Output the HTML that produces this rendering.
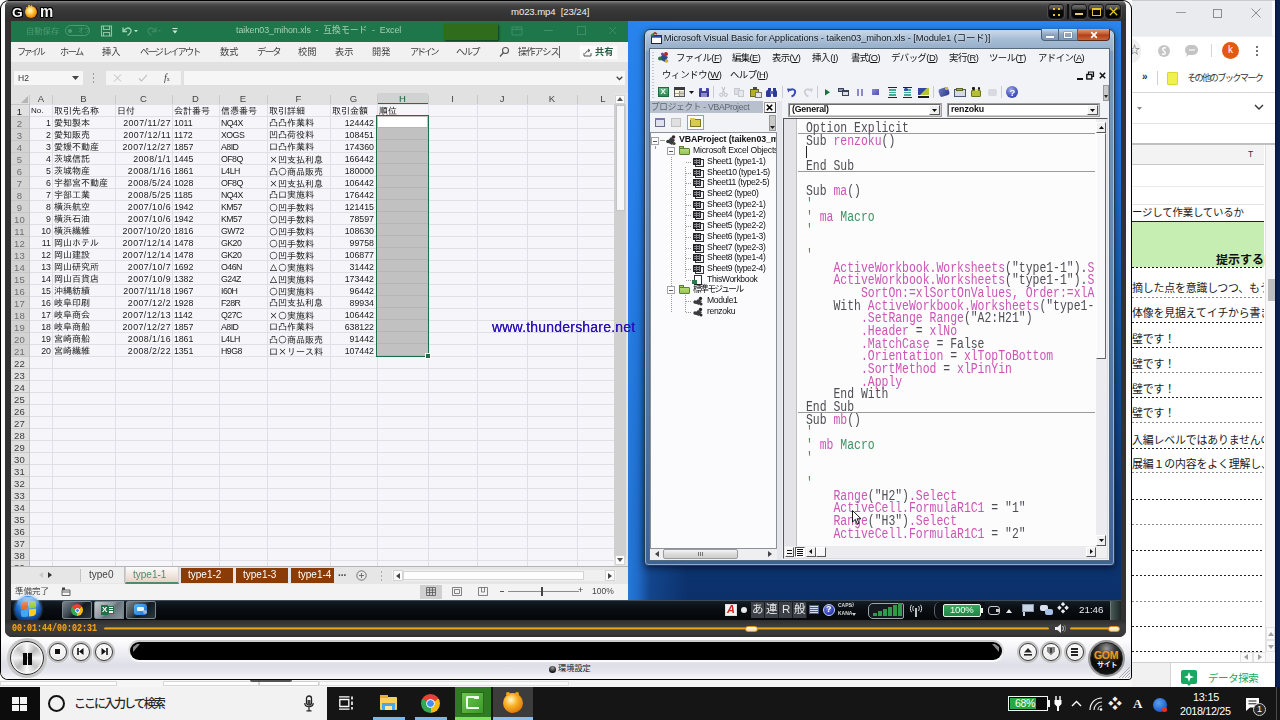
<!DOCTYPE html>
<html lang="ja">
<head>
<meta charset="utf-8">
<title>m023.mp4</title>
<style>
*{box-sizing:border-box;margin:0;padding:0}
html,body{width:1280px;height:720px;overflow:hidden;background:#fff}
body{font-family:"Liberation Sans","Noto Sans CJK JP",sans-serif;font-size:10px;color:#222;position:relative}
.a{position:absolute}
.t{position:absolute;white-space:nowrap;line-height:1}
.xu{font-family:"Liberation Sans","Noto Sans CJK JP",sans-serif;font-size:9px;color:#3a3a3a}
.xc{font-family:"Liberation Sans","IPAGothic","Noto Sans CJK JP",sans-serif;font-size:9px;color:#1a1a1a}
.vu{font-family:"Liberation Sans","Noto Sans CJK JP",sans-serif;font-size:9px;color:#111}
.code{font-family:"Liberation Mono","IPAGothic",monospace;font-size:12px;color:#111;white-space:pre}
svg{position:absolute;overflow:visible}
.cj{font-family:"IPAGothic","Noto Sans CJK JP",sans-serif}
#vid{filter:blur(.5px)}

</style>
</head>
<body>
<div class="a " style="left:0px;top:680px;width:1280px;height:7px;background:#f6f6f6"></div>
<div class="a " style="left:0px;top:681px;width:117px;height:5px;background:#fdfdfd;border:1px solid #d8d8d8"></div>
<div class="a " style="left:163px;top:681px;width:96px;height:5px;background:#fdfdfd;border:1px solid #d8d8d8"></div>
<div class="a " style="left:259px;top:681px;width:60px;height:5px;background:#fff;border:1px solid #cfcfcf"></div>
<div class="a " style="left:319px;top:681px;width:250px;height:5px;background:#fafafa;border:1px solid #e0e0e0"></div>
<div class="a " style="left:250px;top:680px;width:42px;height:2px;background:#555;border-radius:0 0 3px 3px"></div>
<div class="a " style="left:0px;top:0px;width:1132px;height:680px;background:#000;border-radius:9px 9px 4px 8px"></div>
<div class="a " style="left:1px;top:1px;width:1130px;height:678px;background:#fbfbfb;border-radius:8px 8px 3px 7px"></div>
<div class="a " style="left:5px;top:1px;width:1121px;height:636px;background:#323232;border-radius:6px 6px 7px 7px"></div>
<div class="a " style="left:5px;top:0px;width:1121px;height:21px;background:linear-gradient(#000 0,#000 1px,#8a8a8a 1px,#5c5c5c 3px,#404040 6px,#363636 12px,#303030 20px);border-radius:6px 6px 0 0"></div>
<div class="a" style="left:11px;top:20px;width:1110px;height:600px;overflow:hidden"><div class="a" id="vid" style="left:-11px;top:-20px;width:1280px;height:720px">
<div class="a " style="left:628px;top:21px;width:493px;height:580px;background:linear-gradient(90deg,rgba(40,130,236,.880) 0,rgba(40,130,236,.700) 10px,rgba(40,130,236,.250) 22px,rgba(40,130,236,0) 60px),linear-gradient(180deg,#2a86ee 0%,#1f74d8 25%,#1660bd 45%,#114c96 65%,#0d3774 85%,#0c306a 100%)"></div>
<div class="a " style="left:11px;top:21px;width:617px;height:579px;background:#f6f5f9"></div>
<div class="a " style="left:11px;top:21px;width:617px;height:21px;background:#1e774a"></div>
<div class="t xu" style="left:26px;top:26.5px;font-size:8.300px;color:#4f9a73">自動保存</div>
<div class="a " style="left:65px;top:25px;width:25px;height:11px;border:1px solid #4f9a73;border-radius:6px"></div>
<div class="a " style="left:68px;top:29px;width:4px;height:4px;background:#4f9a73;border-radius:2px"></div>
<div class="t xu" style="left:78px;top:27px;font-size:6px;color:#4f9a73">オフ</div>
<svg style="left:100px;top:25px" width="13" height="12" viewBox="0 0 13 12"><path d="M1.5 1h10v10h-10z M3.5 1v3.5h6V1 M3.5 11V7.5h6V11" fill="none" stroke="#8fc4a6" stroke-width="1.1"/></svg>
<svg style="left:121px;top:25px" width="18" height="12" viewBox="0 0 18 12"><path d="M2 2.5v4h4 M2.3 6.2C4 3.3 7.2 2 9.3 4c2 2 .2 4.600-2.800 6.500" fill="none" stroke="#9fd0b4" stroke-width="1.3"/><path d="M13 5h4l-2 2.200z" fill="#b8dcc8"/></svg>
<svg style="left:145px;top:25px" width="18" height="12" viewBox="0 0 18 12"><path d="M11 2.5v4H7 M10.700 6.200C9 3.300 5.800 2 3.700 4c-2 2-.2 4.600 2.800 6.500" fill="none" stroke="#3d8a62" stroke-width="1.3"/><path d="M13 5h3l-1.500 2z" fill="#3d8a62"/></svg>
<svg style="left:171px;top:27px" width="8" height="8" viewBox="0 0 8 8"><path d="M1.500 1.500h5" stroke="#cfe6d8" stroke-width="1"/><path d="M1.500 3.500h5L4 6.500z" fill="#cfe6d8"/></svg>
<div class="t xu" style="left:236px;top:26px;font-size:8.850px;color:#a6cfb7;letter-spacing:-0.050px">taiken03_mihon.xls &nbsp;-&nbsp; 互換モード &nbsp;-&nbsp; Excel</div>
<div class="a " style="left:444px;top:24px;width:54px;height:16px;background:#2f6d1c;box-shadow:1px 1px 2px rgba(0,0,0,.55)"></div>
<svg style="left:511px;top:26px" width="12" height="10" viewBox="0 0 12 10"><path d="M1 1h10v8H1z M1 3.500h10 M6 3.500V1" fill="none" stroke="#3f8e66" stroke-width="1"/></svg>
<div class="a " style="left:544px;top:30px;width:9px;height:1px;background:#3f8e66"></div>
<div class="a " style="left:577px;top:26px;width:9px;height:9px;border:1px solid #3f8e66"></div>
<svg style="left:608px;top:26px" width="9" height="9" viewBox="0 0 9 9"><path d="M1 1l7 7M8 1l-7 7" stroke="#3f8e66" stroke-width="1"/></svg>
<div class="a " style="left:11px;top:42px;width:617px;height:20px;background:#f1f1f1"></div>
<div class="t xu" style="left:17px;top:48px;font-size:9.200px;color:#3c3c3c;letter-spacing:-2.7px">ファイル</div>
<div class="t xu" style="left:60px;top:48px;font-size:9.200px;color:#3c3c3c;letter-spacing:-1.5px">ホーム</div>
<div class="t xu" style="left:102px;top:48px;font-size:9.200px;color:#3c3c3c;letter-spacing:0px">挿入</div>
<div class="t xu" style="left:140px;top:48px;font-size:9.200px;color:#3c3c3c;letter-spacing:-1.8px">ページ レイアウト</div>
<div class="t xu" style="left:220px;top:48px;font-size:9.200px;color:#3c3c3c;letter-spacing:0px">数式</div>
<div class="t xu" style="left:257px;top:48px;font-size:9.200px;color:#3c3c3c;letter-spacing:-1.5px">データ</div>
<div class="t xu" style="left:298px;top:48px;font-size:9.200px;color:#3c3c3c;letter-spacing:0px">校閲</div>
<div class="t xu" style="left:335px;top:48px;font-size:9.200px;color:#3c3c3c;letter-spacing:0px">表示</div>
<div class="t xu" style="left:372px;top:48px;font-size:9.200px;color:#3c3c3c;letter-spacing:0px">開発</div>
<div class="t xu" style="left:410px;top:48px;font-size:9.200px;color:#3c3c3c;letter-spacing:-2.45px">アドイン</div>
<div class="t xu" style="left:456px;top:48px;font-size:9.200px;color:#3c3c3c;letter-spacing:-1.5px">ヘルプ</div>
<svg style="left:499px;top:46px" width="11" height="12" viewBox="0 0 11 12"><circle cx="6.500" cy="4.500" r="3" fill="none" stroke="#555" stroke-width="1.1"/><path d="M4.300 6.800L1 10.500" stroke="#555" stroke-width="1.300"/></svg>
<div class="t xu" style="left:518px;top:48px;font-size:9.200px;color:#3c3c3c;letter-spacing:-1px">操作アシス</div>
<div class="a " style="left:559px;top:46px;width:1px;height:12px;background:#666"></div>
<div class="a " style="left:579px;top:45px;width:39px;height:15px;background:#fbfbfb;border:1px solid #f4f4f4"></div>
<svg style="left:583px;top:48px" width="9" height="9" viewBox="0 0 9 9"><path d="M1 8h7V5 M1 8V5 M2.500 5.500C3 3 5 2.500 6.500 2.500 M5 1l2 1.500L5 4" fill="none" stroke="#444" stroke-width="0.9"/></svg>
<div class="t xu" style="left:595px;top:48px;font-size:9.200px;color:#2c5e45;font-weight:bold">共有</div>
<div class="a " style="left:11px;top:62px;width:617px;height:31px;background:#e1e1e1"></div>
<div class="a " style="left:14px;top:71px;width:69px;height:14px;background:#f6f6f6"></div>
<div class="t xu" style="left:18px;top:74px;font-size:8.500px;color:#333">H2</div>
<svg style="left:72px;top:76px" width="7" height="4" viewBox="0 0 7 4"><path d="M0 0h7L3.500 4z" fill="#444"/></svg>
<div class="a " style="left:93px;top:73px;width:1px;height:2px;background:#9a9a9a"></div>
<div class="a " style="left:93px;top:77px;width:1px;height:2px;background:#9a9a9a"></div>
<div class="a " style="left:93px;top:81px;width:1px;height:2px;background:#9a9a9a"></div>
<div class="a " style="left:106px;top:71px;width:75px;height:14px;background:#f4f4f4"></div>
<svg style="left:113px;top:74px" width="9" height="8" viewBox="0 0 9 8"><path d="M1 .5l7 7M8 .5l-7 7" stroke="#bdbdbd" stroke-width="1"/></svg>
<svg style="left:138px;top:74px" width="10" height="8" viewBox="0 0 10 8"><path d="M1 4.500l2.500 2.500L9 .8" fill="none" stroke="#bdbdbd" stroke-width="1.100"/></svg>
<div class="t " style="left:164px;top:73px;font-size:10px;color:#444;font-family:'Liberation Serif',serif"><i>f</i><span style='font-size:6px'>x</span></div>
<div class="a " style="left:184px;top:71px;width:441px;height:14px;background:#f6f6f6"></div>
<svg style="left:616px;top:76px" width="7" height="5" viewBox="0 0 7 5"><path d="M.700 .700L3.500 3.500 6.300 .700" fill="none" stroke="#444" stroke-width="1.300"/></svg>
<div class="a " style="left:11px;top:93px;width:603px;height:11px;background:#e1e1e1"></div>
<div class="a " style="left:377px;top:93px;width:51px;height:11px;background:#d2d2d2;border-bottom:1.500px solid #217346"></div>
<svg style="left:21px;top:96px" width="7" height="7" viewBox="0 0 7 7"><path d="M7 0v7H0z" fill="#b5b5b5"/></svg>
<div class="t xu" style="left:30px;top:94px;width:22px;text-align:center;font-size:9.500px;color:#444">A</div>
<div class="a " style="left:52px;top:95px;width:1px;height:9px;background:#c9c9c9"></div>
<div class="t xu" style="left:52px;top:94px;width:63px;text-align:center;font-size:9.500px;color:#444">B</div>
<div class="a " style="left:115px;top:95px;width:1px;height:9px;background:#c9c9c9"></div>
<div class="t xu" style="left:115px;top:94px;width:57px;text-align:center;font-size:9.500px;color:#444">C</div>
<div class="a " style="left:172px;top:95px;width:1px;height:9px;background:#c9c9c9"></div>
<div class="t xu" style="left:172px;top:94px;width:47px;text-align:center;font-size:9.500px;color:#444">D</div>
<div class="a " style="left:219px;top:95px;width:1px;height:9px;background:#c9c9c9"></div>
<div class="t xu" style="left:219px;top:94px;width:48px;text-align:center;font-size:9.500px;color:#444">E</div>
<div class="a " style="left:267px;top:95px;width:1px;height:9px;background:#c9c9c9"></div>
<div class="t xu" style="left:267px;top:94px;width:63px;text-align:center;font-size:9.500px;color:#444">F</div>
<div class="a " style="left:330px;top:95px;width:1px;height:9px;background:#c9c9c9"></div>
<div class="t xu" style="left:330px;top:94px;width:47px;text-align:center;font-size:9.500px;color:#444">G</div>
<div class="a " style="left:377px;top:95px;width:1px;height:9px;background:#c9c9c9"></div>
<div class="t xu" style="left:377px;top:94px;width:51px;text-align:center;font-size:9.500px;color:#1d5c3a">H</div>
<div class="a " style="left:428px;top:95px;width:1px;height:9px;background:#c9c9c9"></div>
<div class="t xu" style="left:428px;top:94px;width:49px;text-align:center;font-size:9.500px;color:#444">I</div>
<div class="a " style="left:477px;top:95px;width:1px;height:9px;background:#c9c9c9"></div>
<div class="t xu" style="left:477px;top:94px;width:50px;text-align:center;font-size:9.500px;color:#444">J</div>
<div class="a " style="left:527px;top:95px;width:1px;height:9px;background:#c9c9c9"></div>
<div class="t xu" style="left:527px;top:94px;width:50px;text-align:center;font-size:9.500px;color:#444">K</div>
<div class="a " style="left:577px;top:95px;width:1px;height:9px;background:#c9c9c9"></div>
<div class="t xu" style="left:577px;top:94px;width:52px;text-align:center;font-size:9.500px;color:#444">L</div>
<div class="a " style="left:614px;top:95px;width:1px;height:9px;background:#c9c9c9"></div>
<div class="a " style="left:29px;top:95px;width:1px;height:9px;background:#c9c9c9"></div>
<div class="a " style="left:11px;top:104px;width:19px;height:462px;background:#e1e1e1"></div>
<div class="a " style="left:11px;top:116px;width:19px;height:240px;background:#d3d3d3;border-right:1.500px solid #217346"></div>
<div class="a " style="left:30px;top:104px;width:584px;height:462px;background:repeating-linear-gradient(180deg,#e0dfe5 0,#e0dfe5 1px,transparent 1px,transparent 12px)"></div>
<div class="a " style="left:11px;top:104px;width:19px;height:462px;background:repeating-linear-gradient(180deg,#c6c6c6 0,#c6c6c6 1px,transparent 1px,transparent 12px)"></div>
<div class="a " style="left:52px;top:104px;width:1px;height:462px;background:#e0dfe5"></div>
<div class="a " style="left:115px;top:104px;width:1px;height:462px;background:#e0dfe5"></div>
<div class="a " style="left:172px;top:104px;width:1px;height:462px;background:#e0dfe5"></div>
<div class="a " style="left:219px;top:104px;width:1px;height:462px;background:#e0dfe5"></div>
<div class="a " style="left:267px;top:104px;width:1px;height:462px;background:#e0dfe5"></div>
<div class="a " style="left:330px;top:104px;width:1px;height:462px;background:#e0dfe5"></div>
<div class="a " style="left:377px;top:104px;width:1px;height:462px;background:#e0dfe5"></div>
<div class="a " style="left:428px;top:104px;width:1px;height:462px;background:#e0dfe5"></div>
<div class="a " style="left:477px;top:104px;width:1px;height:462px;background:#e0dfe5"></div>
<div class="a " style="left:527px;top:104px;width:1px;height:462px;background:#e0dfe5"></div>
<div class="a " style="left:577px;top:104px;width:1px;height:462px;background:#e0dfe5"></div>
<div class="a " style="left:614px;top:104px;width:1px;height:462px;background:#e0dfe5"></div>
<div class="a " style="left:29px;top:104px;width:1px;height:462px;background:#c0c0c0"></div>
<div class="t xu" style="left:11px;top:106.8px;width:17px;text-align:center;font-size:9.500px;color:#222;letter-spacing:0.300px">1</div>
<div class="t xu" style="left:11px;top:118.8px;width:17px;text-align:center;font-size:9.500px;color:#6e6e6e;letter-spacing:0.300px">2</div>
<div class="t xu" style="left:11px;top:130.8px;width:17px;text-align:center;font-size:9.500px;color:#6e6e6e;letter-spacing:0.300px">3</div>
<div class="t xu" style="left:11px;top:142.8px;width:17px;text-align:center;font-size:9.500px;color:#6e6e6e;letter-spacing:0.300px">4</div>
<div class="t xu" style="left:11px;top:154.8px;width:17px;text-align:center;font-size:9.500px;color:#6e6e6e;letter-spacing:0.300px">5</div>
<div class="t xu" style="left:11px;top:166.8px;width:17px;text-align:center;font-size:9.500px;color:#6e6e6e;letter-spacing:0.300px">6</div>
<div class="t xu" style="left:11px;top:178.8px;width:17px;text-align:center;font-size:9.500px;color:#6e6e6e;letter-spacing:0.300px">7</div>
<div class="t xu" style="left:11px;top:190.8px;width:17px;text-align:center;font-size:9.500px;color:#6e6e6e;letter-spacing:0.300px">8</div>
<div class="t xu" style="left:11px;top:202.8px;width:17px;text-align:center;font-size:9.500px;color:#6e6e6e;letter-spacing:0.300px">9</div>
<div class="t xu" style="left:11px;top:214.8px;width:17px;text-align:center;font-size:9.500px;color:#6e6e6e;letter-spacing:0.300px">10</div>
<div class="t xu" style="left:11px;top:226.8px;width:17px;text-align:center;font-size:9.500px;color:#6e6e6e;letter-spacing:0.300px">11</div>
<div class="t xu" style="left:11px;top:238.8px;width:17px;text-align:center;font-size:9.500px;color:#6e6e6e;letter-spacing:0.300px">12</div>
<div class="t xu" style="left:11px;top:250.8px;width:17px;text-align:center;font-size:9.500px;color:#6e6e6e;letter-spacing:0.300px">13</div>
<div class="t xu" style="left:11px;top:262.8px;width:17px;text-align:center;font-size:9.500px;color:#6e6e6e;letter-spacing:0.300px">14</div>
<div class="t xu" style="left:11px;top:274.8px;width:17px;text-align:center;font-size:9.500px;color:#6e6e6e;letter-spacing:0.300px">15</div>
<div class="t xu" style="left:11px;top:286.8px;width:17px;text-align:center;font-size:9.500px;color:#6e6e6e;letter-spacing:0.300px">16</div>
<div class="t xu" style="left:11px;top:298.8px;width:17px;text-align:center;font-size:9.500px;color:#6e6e6e;letter-spacing:0.300px">17</div>
<div class="t xu" style="left:11px;top:310.8px;width:17px;text-align:center;font-size:9.500px;color:#6e6e6e;letter-spacing:0.300px">18</div>
<div class="t xu" style="left:11px;top:322.8px;width:17px;text-align:center;font-size:9.500px;color:#6e6e6e;letter-spacing:0.300px">19</div>
<div class="t xu" style="left:11px;top:334.8px;width:17px;text-align:center;font-size:9.500px;color:#6e6e6e;letter-spacing:0.300px">20</div>
<div class="t xu" style="left:11px;top:346.8px;width:17px;text-align:center;font-size:9.500px;color:#6e6e6e;letter-spacing:0.300px">21</div>
<div class="t xu" style="left:11px;top:358.8px;width:17px;text-align:center;font-size:9.500px;color:#3a3a3a;letter-spacing:0.300px">22</div>
<div class="t xu" style="left:11px;top:370.8px;width:17px;text-align:center;font-size:9.500px;color:#3a3a3a;letter-spacing:0.300px">23</div>
<div class="t xu" style="left:11px;top:382.8px;width:17px;text-align:center;font-size:9.500px;color:#3a3a3a;letter-spacing:0.300px">24</div>
<div class="t xu" style="left:11px;top:394.8px;width:17px;text-align:center;font-size:9.500px;color:#3a3a3a;letter-spacing:0.300px">25</div>
<div class="t xu" style="left:11px;top:406.8px;width:17px;text-align:center;font-size:9.500px;color:#3a3a3a;letter-spacing:0.300px">26</div>
<div class="t xu" style="left:11px;top:418.8px;width:17px;text-align:center;font-size:9.500px;color:#3a3a3a;letter-spacing:0.300px">27</div>
<div class="t xu" style="left:11px;top:430.8px;width:17px;text-align:center;font-size:9.500px;color:#3a3a3a;letter-spacing:0.300px">28</div>
<div class="t xu" style="left:11px;top:442.8px;width:17px;text-align:center;font-size:9.500px;color:#3a3a3a;letter-spacing:0.300px">29</div>
<div class="t xu" style="left:11px;top:454.8px;width:17px;text-align:center;font-size:9.500px;color:#3a3a3a;letter-spacing:0.300px">30</div>
<div class="t xu" style="left:11px;top:466.8px;width:17px;text-align:center;font-size:9.500px;color:#3a3a3a;letter-spacing:0.300px">31</div>
<div class="t xu" style="left:11px;top:478.8px;width:17px;text-align:center;font-size:9.500px;color:#3a3a3a;letter-spacing:0.300px">32</div>
<div class="t xu" style="left:11px;top:490.8px;width:17px;text-align:center;font-size:9.500px;color:#3a3a3a;letter-spacing:0.300px">33</div>
<div class="t xu" style="left:11px;top:502.8px;width:17px;text-align:center;font-size:9.500px;color:#3a3a3a;letter-spacing:0.300px">34</div>
<div class="t xu" style="left:11px;top:514.8px;width:17px;text-align:center;font-size:9.500px;color:#3a3a3a;letter-spacing:0.300px">35</div>
<div class="t xu" style="left:11px;top:526.8px;width:17px;text-align:center;font-size:9.500px;color:#3a3a3a;letter-spacing:0.300px">36</div>
<div class="t xu" style="left:11px;top:538.8px;width:17px;text-align:center;font-size:9.500px;color:#3a3a3a;letter-spacing:0.300px">37</div>
<div class="t xu" style="left:11px;top:550.8px;width:17px;text-align:center;font-size:9.500px;color:#3a3a3a;letter-spacing:0.300px">38</div>
<div class="t xu" style="left:11px;top:562.8px;width:17px;text-align:center;font-size:9.500px;color:#3a3a3a;letter-spacing:0.300px">39</div>
<div class="a " style="left:377px;top:116px;width:51px;height:240px;background:#c1c1c1"></div>
<div class="a " style="left:378px;top:117px;width:49px;height:11px;background:#fff"></div>
<div class="a " style="left:376px;top:115px;width:53px;height:242px;border:1.500px solid #1e6e45"></div>
<div class="a " style="left:377px;top:127px;width:51px;height:229px;background:repeating-linear-gradient(180deg,#b6b6b6 0,#b6b6b6 1px,transparent 1px,transparent 12px)"></div>
<div class="a " style="left:426px;top:354px;width:4px;height:4px;background:#1e6e45;border:1px solid #fff;box-sizing:content-box;margin:-1px"></div>
<div class="t xc" style="left:31px;top:107px;font-size:8px">No.</div>
<div class="t xc" style="left:54px;top:107px;font-size:9px">取引先名称</div>
<div class="t xc" style="left:117px;top:107px;font-size:9px">日付</div>
<div class="t xc" style="left:174px;top:107px;font-size:9px">会計番号</div>
<div class="t xc" style="left:221px;top:107px;font-size:9px">信憑番号</div>
<div class="t xc" style="left:269px;top:107px;font-size:9px">取引詳細</div>
<div class="t xc" style="left:332px;top:107px;font-size:9px">取引金額</div>
<div class="t xc" style="left:379px;top:107px;font-size:9px">順位</div>
<div class="t xc" style="left:30px;top:119.4px;width:21px;text-align:right;font-size:8.800px">1</div>
<div class="t xc" style="left:54px;top:119.4px;font-size:9px">愛知製本</div>
<div class="t xc" style="left:115px;top:119.4px;width:56px;text-align:right;font-size:8.800px;letter-spacing:0.450px">2007/11/27</div>
<div class="t xc" style="left:174px;top:119.4px;font-size:8.800px;letter-spacing:-0.100px">1011</div>
<div class="t xc" style="left:221px;top:119.4px;font-size:8.800px;letter-spacing:-0.550px">NQ4X</div>
<div class="t xc" style="left:269px;top:119.4px;font-size:9px">凸凸作業料</div>
<div class="t xc" style="left:330px;top:119.4px;width:44px;text-align:right;font-size:8.800px">124442</div>
<div class="t xc" style="left:30px;top:131.4px;width:21px;text-align:right;font-size:8.800px">2</div>
<div class="t xc" style="left:54px;top:131.4px;font-size:9px">愛知販売</div>
<div class="t xc" style="left:115px;top:131.4px;width:56px;text-align:right;font-size:8.800px;letter-spacing:0.450px">2007/12/11</div>
<div class="t xc" style="left:174px;top:131.4px;font-size:8.800px;letter-spacing:-0.100px">1172</div>
<div class="t xc" style="left:221px;top:131.4px;font-size:8.800px;letter-spacing:-0.550px">XOGS</div>
<div class="t xc" style="left:269px;top:131.4px;font-size:9px">凹凸荷役料</div>
<div class="t xc" style="left:330px;top:131.4px;width:44px;text-align:right;font-size:8.800px">108451</div>
<div class="t xc" style="left:30px;top:143.4px;width:21px;text-align:right;font-size:8.800px">3</div>
<div class="t xc" style="left:54px;top:143.4px;font-size:9px">愛媛不動産</div>
<div class="t xc" style="left:115px;top:143.4px;width:56px;text-align:right;font-size:8.800px;letter-spacing:0.450px">2007/12/27</div>
<div class="t xc" style="left:174px;top:143.4px;font-size:8.800px;letter-spacing:-0.100px">1857</div>
<div class="t xc" style="left:221px;top:143.4px;font-size:8.800px;letter-spacing:-0.550px">A8ID</div>
<div class="t xc" style="left:269px;top:143.4px;font-size:9px">口凸作業料</div>
<div class="t xc" style="left:330px;top:143.4px;width:44px;text-align:right;font-size:8.800px">174360</div>
<div class="t xc" style="left:30px;top:155.4px;width:21px;text-align:right;font-size:8.800px">4</div>
<div class="t xc" style="left:54px;top:155.4px;font-size:9px">茨城信託</div>
<div class="t xc" style="left:115px;top:155.4px;width:56px;text-align:right;font-size:8.800px;letter-spacing:0.450px">2008/1/1</div>
<div class="t xc" style="left:174px;top:155.4px;font-size:8.800px;letter-spacing:-0.100px">1445</div>
<div class="t xc" style="left:221px;top:155.4px;font-size:8.800px;letter-spacing:-0.550px">OF8Q</div>
<div class="t xc" style="left:269px;top:155.4px;font-size:9px"><span class="cj">×</span>凹支払利息</div>
<div class="t xc" style="left:330px;top:155.4px;width:44px;text-align:right;font-size:8.800px">166442</div>
<div class="t xc" style="left:30px;top:167.4px;width:21px;text-align:right;font-size:8.800px">5</div>
<div class="t xc" style="left:54px;top:167.4px;font-size:9px">茨城物産</div>
<div class="t xc" style="left:115px;top:167.4px;width:56px;text-align:right;font-size:8.800px;letter-spacing:0.450px">2008/1/16</div>
<div class="t xc" style="left:174px;top:167.4px;font-size:8.800px;letter-spacing:-0.100px">1861</div>
<div class="t xc" style="left:221px;top:167.4px;font-size:8.800px;letter-spacing:-0.550px">L4LH</div>
<div class="t xc" style="left:269px;top:167.4px;font-size:9px">凸<span class="cj">○</span>商品販売</div>
<div class="t xc" style="left:330px;top:167.4px;width:44px;text-align:right;font-size:8.800px">180000</div>
<div class="t xc" style="left:30px;top:179.4px;width:21px;text-align:right;font-size:8.800px">6</div>
<div class="t xc" style="left:54px;top:179.4px;font-size:9px">宇都宮不動産</div>
<div class="t xc" style="left:115px;top:179.4px;width:56px;text-align:right;font-size:8.800px;letter-spacing:0.450px">2008/5/24</div>
<div class="t xc" style="left:174px;top:179.4px;font-size:8.800px;letter-spacing:-0.100px">1028</div>
<div class="t xc" style="left:221px;top:179.4px;font-size:8.800px;letter-spacing:-0.550px">OF8Q</div>
<div class="t xc" style="left:269px;top:179.4px;font-size:9px"><span class="cj">×</span>凹支払利息</div>
<div class="t xc" style="left:330px;top:179.4px;width:44px;text-align:right;font-size:8.800px">106442</div>
<div class="t xc" style="left:30px;top:191.4px;width:21px;text-align:right;font-size:8.800px">7</div>
<div class="t xc" style="left:54px;top:191.4px;font-size:9px">宇部工業</div>
<div class="t xc" style="left:115px;top:191.4px;width:56px;text-align:right;font-size:8.800px;letter-spacing:0.450px">2008/5/25</div>
<div class="t xc" style="left:174px;top:191.4px;font-size:8.800px;letter-spacing:-0.100px">1185</div>
<div class="t xc" style="left:221px;top:191.4px;font-size:8.800px;letter-spacing:-0.550px">NQ4X</div>
<div class="t xc" style="left:269px;top:191.4px;font-size:9px">凸口実施料</div>
<div class="t xc" style="left:330px;top:191.4px;width:44px;text-align:right;font-size:8.800px">176442</div>
<div class="t xc" style="left:30px;top:203.4px;width:21px;text-align:right;font-size:8.800px">8</div>
<div class="t xc" style="left:54px;top:203.4px;font-size:9px">横浜航空</div>
<div class="t xc" style="left:115px;top:203.4px;width:56px;text-align:right;font-size:8.800px;letter-spacing:0.450px">2007/10/6</div>
<div class="t xc" style="left:174px;top:203.4px;font-size:8.800px;letter-spacing:-0.100px">1942</div>
<div class="t xc" style="left:221px;top:203.4px;font-size:8.800px;letter-spacing:-0.550px">KM57</div>
<div class="t xc" style="left:269px;top:203.4px;font-size:9px"><span class="cj">○</span>凹手数料</div>
<div class="t xc" style="left:330px;top:203.4px;width:44px;text-align:right;font-size:8.800px">121415</div>
<div class="t xc" style="left:30px;top:215.4px;width:21px;text-align:right;font-size:8.800px">9</div>
<div class="t xc" style="left:54px;top:215.4px;font-size:9px">横浜石油</div>
<div class="t xc" style="left:115px;top:215.4px;width:56px;text-align:right;font-size:8.800px;letter-spacing:0.450px">2007/10/6</div>
<div class="t xc" style="left:174px;top:215.4px;font-size:8.800px;letter-spacing:-0.100px">1942</div>
<div class="t xc" style="left:221px;top:215.4px;font-size:8.800px;letter-spacing:-0.550px">KM57</div>
<div class="t xc" style="left:269px;top:215.4px;font-size:9px"><span class="cj">○</span>凹手数料</div>
<div class="t xc" style="left:330px;top:215.4px;width:44px;text-align:right;font-size:8.800px">78597</div>
<div class="t xc" style="left:30px;top:227.4px;width:21px;text-align:right;font-size:8.800px">10</div>
<div class="t xc" style="left:54px;top:227.4px;font-size:9px">横浜繊維</div>
<div class="t xc" style="left:115px;top:227.4px;width:56px;text-align:right;font-size:8.800px;letter-spacing:0.450px">2007/10/20</div>
<div class="t xc" style="left:174px;top:227.4px;font-size:8.800px;letter-spacing:-0.100px">1816</div>
<div class="t xc" style="left:221px;top:227.4px;font-size:8.800px;letter-spacing:-0.550px">GW72</div>
<div class="t xc" style="left:269px;top:227.4px;font-size:9px"><span class="cj">○</span>凹手数料</div>
<div class="t xc" style="left:330px;top:227.4px;width:44px;text-align:right;font-size:8.800px">108630</div>
<div class="t xc" style="left:30px;top:239.4px;width:21px;text-align:right;font-size:8.800px">11</div>
<div class="t xc" style="left:54px;top:239.4px;font-size:9px">岡山ホテル</div>
<div class="t xc" style="left:115px;top:239.4px;width:56px;text-align:right;font-size:8.800px;letter-spacing:0.450px">2007/12/14</div>
<div class="t xc" style="left:174px;top:239.4px;font-size:8.800px;letter-spacing:-0.100px">1478</div>
<div class="t xc" style="left:221px;top:239.4px;font-size:8.800px;letter-spacing:-0.550px">GK20</div>
<div class="t xc" style="left:269px;top:239.4px;font-size:9px"><span class="cj">○</span>凹手数料</div>
<div class="t xc" style="left:330px;top:239.4px;width:44px;text-align:right;font-size:8.800px">99758</div>
<div class="t xc" style="left:30px;top:251.4px;width:21px;text-align:right;font-size:8.800px">12</div>
<div class="t xc" style="left:54px;top:251.4px;font-size:9px">岡山建設</div>
<div class="t xc" style="left:115px;top:251.4px;width:56px;text-align:right;font-size:8.800px;letter-spacing:0.450px">2007/12/14</div>
<div class="t xc" style="left:174px;top:251.4px;font-size:8.800px;letter-spacing:-0.100px">1478</div>
<div class="t xc" style="left:221px;top:251.4px;font-size:8.800px;letter-spacing:-0.550px">GK20</div>
<div class="t xc" style="left:269px;top:251.4px;font-size:9px"><span class="cj">○</span>凹手数料</div>
<div class="t xc" style="left:330px;top:251.4px;width:44px;text-align:right;font-size:8.800px">106877</div>
<div class="t xc" style="left:30px;top:263.4px;width:21px;text-align:right;font-size:8.800px">13</div>
<div class="t xc" style="left:54px;top:263.4px;font-size:9px">岡山研究所</div>
<div class="t xc" style="left:115px;top:263.4px;width:56px;text-align:right;font-size:8.800px;letter-spacing:0.450px">2007/10/7</div>
<div class="t xc" style="left:174px;top:263.4px;font-size:8.800px;letter-spacing:-0.100px">1692</div>
<div class="t xc" style="left:221px;top:263.4px;font-size:8.800px;letter-spacing:-0.550px">O46N</div>
<div class="t xc" style="left:269px;top:263.4px;font-size:9px"><span class="cj">△</span><span class="cj">○</span>実施料</div>
<div class="t xc" style="left:330px;top:263.4px;width:44px;text-align:right;font-size:8.800px">31442</div>
<div class="t xc" style="left:30px;top:275.4px;width:21px;text-align:right;font-size:8.800px">14</div>
<div class="t xc" style="left:54px;top:275.4px;font-size:9px">岡山百貨店</div>
<div class="t xc" style="left:115px;top:275.4px;width:56px;text-align:right;font-size:8.800px;letter-spacing:0.450px">2007/10/9</div>
<div class="t xc" style="left:174px;top:275.4px;font-size:8.800px;letter-spacing:-0.100px">1382</div>
<div class="t xc" style="left:221px;top:275.4px;font-size:8.800px;letter-spacing:-0.550px">G24Z</div>
<div class="t xc" style="left:269px;top:275.4px;font-size:9px"><span class="cj">△</span>凹実施料</div>
<div class="t xc" style="left:330px;top:275.4px;width:44px;text-align:right;font-size:8.800px">173442</div>
<div class="t xc" style="left:30px;top:287.4px;width:21px;text-align:right;font-size:8.800px">15</div>
<div class="t xc" style="left:54px;top:287.4px;font-size:9px">沖縄紡績</div>
<div class="t xc" style="left:115px;top:287.4px;width:56px;text-align:right;font-size:8.800px;letter-spacing:0.450px">2007/11/18</div>
<div class="t xc" style="left:174px;top:287.4px;font-size:8.800px;letter-spacing:-0.100px">1967</div>
<div class="t xc" style="left:221px;top:287.4px;font-size:8.800px;letter-spacing:-0.550px">I60H</div>
<div class="t xc" style="left:269px;top:287.4px;font-size:9px"><span class="cj">○</span>凹実施料</div>
<div class="t xc" style="left:330px;top:287.4px;width:44px;text-align:right;font-size:8.800px">96442</div>
<div class="t xc" style="left:30px;top:299.4px;width:21px;text-align:right;font-size:8.800px">16</div>
<div class="t xc" style="left:54px;top:299.4px;font-size:9px">岐阜印刷</div>
<div class="t xc" style="left:115px;top:299.4px;width:56px;text-align:right;font-size:8.800px;letter-spacing:0.450px">2007/12/2</div>
<div class="t xc" style="left:174px;top:299.4px;font-size:8.800px;letter-spacing:-0.100px">1928</div>
<div class="t xc" style="left:221px;top:299.4px;font-size:8.800px;letter-spacing:-0.550px">F28R</div>
<div class="t xc" style="left:269px;top:299.4px;font-size:9px">凸凹支払利息</div>
<div class="t xc" style="left:330px;top:299.4px;width:44px;text-align:right;font-size:8.800px">89934</div>
<div class="t xc" style="left:30px;top:311.4px;width:21px;text-align:right;font-size:8.800px">17</div>
<div class="t xc" style="left:54px;top:311.4px;font-size:9px">岐阜商会</div>
<div class="t xc" style="left:115px;top:311.4px;width:56px;text-align:right;font-size:8.800px;letter-spacing:0.450px">2007/12/13</div>
<div class="t xc" style="left:174px;top:311.4px;font-size:8.800px;letter-spacing:-0.100px">1142</div>
<div class="t xc" style="left:221px;top:311.4px;font-size:8.800px;letter-spacing:-0.550px">Q27C</div>
<div class="t xc" style="left:269px;top:311.4px;font-size:9px"><span class="cj">×</span><span class="cj">○</span>実施料</div>
<div class="t xc" style="left:330px;top:311.4px;width:44px;text-align:right;font-size:8.800px">106442</div>
<div class="t xc" style="left:30px;top:323.4px;width:21px;text-align:right;font-size:8.800px">18</div>
<div class="t xc" style="left:54px;top:323.4px;font-size:9px">岐阜商船</div>
<div class="t xc" style="left:115px;top:323.4px;width:56px;text-align:right;font-size:8.800px;letter-spacing:0.450px">2007/12/27</div>
<div class="t xc" style="left:174px;top:323.4px;font-size:8.800px;letter-spacing:-0.100px">1857</div>
<div class="t xc" style="left:221px;top:323.4px;font-size:8.800px;letter-spacing:-0.550px">A8ID</div>
<div class="t xc" style="left:269px;top:323.4px;font-size:9px">口凸作業料</div>
<div class="t xc" style="left:330px;top:323.4px;width:44px;text-align:right;font-size:8.800px">638122</div>
<div class="t xc" style="left:30px;top:335.4px;width:21px;text-align:right;font-size:8.800px">19</div>
<div class="t xc" style="left:54px;top:335.4px;font-size:9px">宮崎商船</div>
<div class="t xc" style="left:115px;top:335.4px;width:56px;text-align:right;font-size:8.800px;letter-spacing:0.450px">2008/1/16</div>
<div class="t xc" style="left:174px;top:335.4px;font-size:8.800px;letter-spacing:-0.100px">1861</div>
<div class="t xc" style="left:221px;top:335.4px;font-size:8.800px;letter-spacing:-0.550px">L4LH</div>
<div class="t xc" style="left:269px;top:335.4px;font-size:9px">凸<span class="cj">○</span>商品販売</div>
<div class="t xc" style="left:330px;top:335.4px;width:44px;text-align:right;font-size:8.800px">91442</div>
<div class="t xc" style="left:30px;top:347.4px;width:21px;text-align:right;font-size:8.800px">20</div>
<div class="t xc" style="left:54px;top:347.4px;font-size:9px">宮崎繊維</div>
<div class="t xc" style="left:115px;top:347.4px;width:56px;text-align:right;font-size:8.800px;letter-spacing:0.450px">2008/2/22</div>
<div class="t xc" style="left:174px;top:347.4px;font-size:8.800px;letter-spacing:-0.100px">1351</div>
<div class="t xc" style="left:221px;top:347.4px;font-size:8.800px;letter-spacing:-0.550px">H9G8</div>
<div class="t xc" style="left:269px;top:347.4px;font-size:9px">口<span class="cj">×</span>リース料</div>
<div class="t xc" style="left:330px;top:347.4px;width:44px;text-align:right;font-size:8.800px">107442</div>
<div class="a " style="left:614px;top:93px;width:14px;height:473px;background:#e4e4e4"></div>
<div class="a " style="left:614px;top:104px;width:12px;height:454px;background:#cfcfcf"></div>
<div class="a " style="left:616px;top:105px;width:9px;height:106px;background:#f6f6f8;border:1px solid #c4c4c4"></div>
<div class="a " style="left:615px;top:95px;width:10px;height:9px;background:#fdfdfd;border:1px solid #d4d4d4"></div>
<div class="a " style="left:615px;top:555px;width:10px;height:10px;background:#fdfdfd;border:1px solid #d4d4d4"></div>
<svg style="left:617px;top:97px" width="6" height="4" viewBox="0 0 6 4"><path d="M0 4h6L3 0z" fill="#555"/></svg>
<svg style="left:617px;top:558px" width="6" height="4" viewBox="0 0 6 4"><path d="M0 0h6L3 4z" fill="#555"/></svg>
<div class="a " style="left:11px;top:566px;width:617px;height:18px;background:#e6e6e6;border-top:1px solid #b4b4b4"></div>
<svg style="left:39px;top:572px" width="4" height="6" viewBox="0 0 4 6"><path d="M4 0v6L0 3z" fill="#c9c9c9"/></svg>
<svg style="left:48px;top:572px" width="4" height="6" viewBox="0 0 4 6"><path d="M0 0v6L4 3z" fill="#333"/></svg>
<div class="a " style="left:80px;top:567px;width:45px;height:16px;background:#eeeeee;border-right:1px solid #c0c0c0"></div>
<div class="a " style="left:80px;top:569px;width:1px;height:13px;background:#c4c4c4"></div>
<div class="t xu" style="left:89px;top:570px;font-size:10px;color:#444">type0</div>
<div class="a " style="left:125px;top:567px;width:54px;height:17px;background:linear-gradient(#fbfbfb,#f0e4dc 60%,#e6d2c6);border-bottom:2px solid #4e8a6e;border-left:1px solid #cfcfcf;border-right:1px solid #cfcfcf"></div>
<div class="t xu" style="left:133px;top:570px;font-size:10px;color:#4f8a70">type1-1</div>
<div class="a " style="left:181px;top:568px;width:52px;height:15px;background:#8a3b06;overflow:hidden"><div class="t xu" style="left:7px;top:2px;font-size:10px;color:#fff">type1-2</div></div>
<div class="a " style="left:236px;top:568px;width:52px;height:15px;background:#8a3b06;overflow:hidden"><div class="t xu" style="left:7px;top:2px;font-size:10px;color:#fff">type1-3</div></div>
<div class="a " style="left:291px;top:568px;width:43px;height:15px;background:#8a3b06;overflow:hidden"><div class="t xu" style="left:7px;top:2px;font-size:10px;color:#fff">type1-4</div></div>
<div class="t xu" style="left:338px;top:568px;font-size:10px;color:#444;font-weight:bold">...</div>
<svg style="left:356px;top:570px" width="11" height="11" viewBox="0 0 11 11"><circle cx="5.500" cy="5.500" r="4.700" fill="none" stroke="#666" stroke-width="0.900"/><path d="M5.500 3v5M3 5.500h5" stroke="#666" stroke-width="0.900"/></svg>
<div class="a " style="left:381px;top:571px;width:1px;height:2px;background:#aaa"></div>
<div class="a " style="left:381px;top:575px;width:1px;height:2px;background:#aaa"></div>
<div class="a " style="left:381px;top:579px;width:1px;height:2px;background:#aaa"></div>
<div class="a " style="left:392px;top:570px;width:224px;height:11px;background:#f0f0f0"></div>
<div class="a " style="left:403px;top:571px;width:181px;height:9px;background:#fdfdfd;border:1px solid #d4d4d4"></div>
<div class="a " style="left:393px;top:570px;width:10px;height:11px;background:#fdfdfd;border:1px solid #d4d4d4"></div>
<div class="a " style="left:605px;top:570px;width:10px;height:11px;background:#fdfdfd;border:1px solid #d4d4d4"></div>
<svg style="left:396px;top:573px" width="4" height="6" viewBox="0 0 4 6"><path d="M4 0v6L0 3z" fill="#444"/></svg>
<svg style="left:608px;top:573px" width="4" height="6" viewBox="0 0 4 6"><path d="M0 0v6L4 3z" fill="#444"/></svg>
<div class="a " style="left:11px;top:584px;width:617px;height:16px;background:#f3f3f3"></div>
<div class="t xu" style="left:15px;top:587px;font-size:8.500px;color:#444">準備完了</div>
<svg style="left:61px;top:587px" width="10" height="9" viewBox="0 0 10 9"><path d="M1 3h8v5.500H1z M1 5h8" fill="none" stroke="#555" stroke-width="0.900"/><rect x="1" y=".5" width="3" height="2.500" fill="#444"/></svg>
<div class="a " style="left:420px;top:585px;width:22px;height:14px;background:#d0d0d0"></div>
<svg style="left:426px;top:587px" width="10" height="9" viewBox="0 0 10 9"><path d="M.5 .5h9v8h-9z M.5 3h9M.5 5.500h9M3.500 .5v8M6.500 .5v8" fill="none" stroke="#555" stroke-width="0.800"/></svg>
<svg style="left:452px;top:587px" width="10" height="9" viewBox="0 0 10 9"><path d="M.5 .5h9v8h-9z M2.500 2.500h5v4h-5z" fill="none" stroke="#666" stroke-width="0.800"/></svg>
<svg style="left:478px;top:587px" width="10" height="9" viewBox="0 0 10 9"><path d="M.5 .5h9v8h-9z M3.500 .5v4.500h3V.5" fill="none" stroke="#666" stroke-width="0.800"/></svg>
<div class="a " style="left:500px;top:591px;width:4px;height:1px;background:#555"></div>
<div class="a " style="left:508px;top:591px;width:71px;height:1px;background:#8c8c8c"></div>
<div class="a " style="left:541px;top:587px;width:2px;height:9px;background:#444"></div>
<div class="t xu" style="left:578px;top:586px;font-size:9px;color:#444">+</div>
<div class="t xu" style="left:592px;top:587px;font-size:8.500px;color:#444">100%</div>
<div class="t " style="left:492px;top:320px;font-size:14px;color:#2a10b8;letter-spacing:0.200px;z-index:50;text-shadow:0 0 .6px #2a10b8">www.thundershare.net</div>
<div class="a " style="left:644px;top:29px;width:471px;height:537px;background:linear-gradient(180deg,#a9bfd6 0,#9db5cf 19px,#7a9cc4 22px,#5f86b8 45%,#3d629a 100%);border:1px solid #243850;border-radius:6px 6px 4px 4px;box-shadow:0 0 0 1px rgba(210,230,250,.55) inset,0 2px 7px rgba(0,0,10,.55)"></div>
<div class="a " style="left:646px;top:31px;width:467px;height:17px;background:linear-gradient(180deg,#c9d8e8 0,#a8bed6 45%,#98b0cb 100%);border-radius:5px 5px 0 0"></div>
<svg style="left:649.500px;top:32px" width="13" height="13" viewBox="0 0 13 13"><rect x="1.500" y="3.500" width="10" height="8" fill="#fff" stroke="#223" stroke-width="1"/><rect x="1.500" y="3.500" width="10" height="2.200" fill="#2a4a9a"/><path d="M1 4L5 .8l2 1.400" stroke="#b03020" stroke-width="1.600" fill="none"/><circle cx="2.500" cy="3" r="1.200" fill="#3a8a3a"/></svg>
<div class="t vu" style="left:663.7px;top:33.3px;font-size:9.400px;color:#10151c;letter-spacing:-0.080px;text-shadow:0 0 3px rgba(255,255,255,.8)">Microsoft Visual Basic for Applications - taiken03_mihon.xls - [Module1 (コード)]</div>
<div class="a " style="left:1041px;top:29px;width:18px;height:12px;background:linear-gradient(#c6d4e4,#8fa6c0 50%,#7e98b6);border:1px solid #4b617c;border-top:none;border-radius:0 0 0 4px"></div>
<div class="a " style="left:1046px;top:36px;width:8px;height:2px;background:#fff;box-shadow:0 0 1px #334"></div>
<div class="a " style="left:1059px;top:29px;width:19px;height:12px;background:linear-gradient(#c6d4e4,#8fa6c0 50%,#7e98b6);border:1px solid #4b617c;border-top:none;border-left:none"></div>
<div class="a " style="left:1064px;top:32px;width:8px;height:6px;border:1.500px solid #fff;box-shadow:0 0 1px #334"></div>
<div class="a " style="left:1078px;top:29px;width:32px;height:12px;background:linear-gradient(#e0a080,#c45a30 45%,#b2401a 55%,#c86438);border:1px solid #5a2a1a;border-top:none;border-left:none;border-radius:0 0 4px 0"></div>
<svg style="left:1090px;top:31px" width="8" height="8" viewBox="0 0 8 8"><path d="M1.200 1.200l5.600 5.600M6.800 1.200L1.200 6.800" stroke="#fff" stroke-width="1.700"/></svg>
<div class="a " style="left:649px;top:48px;width:461px;height:513px;background:#f2f3f7;border:1px solid #55697f"></div>
<div class="a " style="left:652px;top:52px;width:2px;height:1px;background:#c5c8d0"></div>
<div class="a " style="left:652px;top:55px;width:2px;height:1px;background:#c5c8d0"></div>
<div class="a " style="left:652px;top:58px;width:2px;height:1px;background:#c5c8d0"></div>
<div class="a " style="left:652px;top:61px;width:2px;height:1px;background:#c5c8d0"></div>
<div class="a " style="left:652px;top:64px;width:2px;height:1px;background:#c5c8d0"></div>
<div class="a " style="left:652px;top:67px;width:2px;height:1px;background:#c5c8d0"></div>
<div class="a " style="left:652px;top:70px;width:2px;height:1px;background:#c5c8d0"></div>
<div class="a " style="left:652px;top:73px;width:2px;height:1px;background:#c5c8d0"></div>
<div class="a " style="left:652px;top:76px;width:2px;height:1px;background:#c5c8d0"></div>
<div class="a " style="left:652px;top:79px;width:2px;height:1px;background:#c5c8d0"></div>
<div class="a " style="left:652px;top:82px;width:2px;height:1px;background:#c5c8d0"></div>
<div class="a " style="left:652px;top:85px;width:2px;height:1px;background:#c5c8d0"></div>
<div class="a " style="left:652px;top:88px;width:2px;height:1px;background:#c5c8d0"></div>
<div class="a " style="left:652px;top:91px;width:2px;height:1px;background:#c5c8d0"></div>
<div class="a " style="left:652px;top:94px;width:2px;height:1px;background:#c5c8d0"></div>
<div class="a " style="left:652px;top:97px;width:2px;height:1px;background:#c5c8d0"></div>
<svg style="left:657px;top:51px" width="13" height="13" viewBox="0 0 13 13"><path d="M2 8l4-5 5 3-3 5z" fill="#304a90"/><circle cx="9" cy="3" r="2" fill="#b02828"/><circle cx="3" cy="7.500" r="2" fill="#2a7a3a"/><circle cx="9.500" cy="10" r="1.800" fill="#c8b020"/><circle cx="5.500" cy="3" r="1.500" fill="#7a3aa0"/></svg>
<div class="t vu" style="left:676px;top:53px;font-size:9.400px;letter-spacing:-0.55px">ファイル(<u>F</u>)</div>
<div class="t vu" style="left:732px;top:53px;font-size:9.400px;letter-spacing:-0.6px">編集(<u>E</u>)</div>
<div class="t vu" style="left:772px;top:53px;font-size:9.400px;letter-spacing:-0.6px">表示(<u>V</u>)</div>
<div class="t vu" style="left:812px;top:53px;font-size:9.400px;letter-spacing:-0.3px">挿入(<u>I</u>)</div>
<div class="t vu" style="left:851px;top:53px;font-size:9.400px;letter-spacing:-0.7px">書式(<u>O</u>)</div>
<div class="t vu" style="left:891px;top:53px;font-size:9.400px;letter-spacing:-0.55px">デバッグ(<u>D</u>)</div>
<div class="t vu" style="left:949px;top:53px;font-size:9.400px;letter-spacing:-0.5px">実行(<u>R</u>)</div>
<div class="t vu" style="left:989px;top:53px;font-size:9.400px;letter-spacing:-0.55px">ツール(<u>T</u>)</div>
<div class="t vu" style="left:1038px;top:53px;font-size:9.400px;letter-spacing:-0.55px">アドイン(<u>A</u>)</div>
<div class="t vu" style="left:662px;top:70px;font-size:9.400px;letter-spacing:-0.300px">ウィンドウ(<u>W</u>)</div>
<div class="t vu" style="left:730px;top:70px;font-size:9.400px;letter-spacing:-0.550px">ヘルプ(<u>H</u>)</div>
<div class="a " style="left:1077px;top:78px;width:6px;height:2px;background:#111"></div>
<svg style="left:1086px;top:71px" width="8" height="9" viewBox="0 0 8 9"><path d="M2.500 3V1h5v4.500H6" fill="none" stroke="#111" stroke-width="1.200"/><rect x=".8" y="3.500" width="5" height="4.500" fill="none" stroke="#111" stroke-width="1.400"/></svg>
<svg style="left:1099px;top:72px" width="7" height="7" viewBox="0 0 7 7"><path d="M.8 .8l5.400 5.400M6.200 .8L.8 6.200" stroke="#111" stroke-width="1.500"/></svg>
<div class="a " style="left:658px;top:87px;width:11px;height:10px;background:linear-gradient(#6ab488,#2f8a52);border:1px solid #1f6a3c"></div>
<div class="t vu" style="left:660.5px;top:88px;font-size:8px;font-weight:bold;color:#f4fff6;letter-spacing:0">X</div>
<div class="a " style="left:674px;top:87px;width:11px;height:10px;background:#fbf6dc;border:1px solid #555"></div>
<div class="a " style="left:674px;top:87px;width:11px;height:3px;background:#3a3a3a"></div>
<div class="a " style="left:679px;top:91px;width:5px;height:5px;background:#cfcfc4;border-left:1px solid #8a8a80"></div>
<div class="a " style="left:675px;top:93px;width:9px;height:1px;background:#a8a89a"></div>
<svg style="left:689px;top:91px" width="5" height="3" viewBox="0 0 5 3"><path d="M0 0h5L2.500 3z" fill="#111"/></svg>
<div class="a " style="left:699px;top:87.5px;width:10px;height:9.5px;background:linear-gradient(#4a4ab0,#30308a);border-radius:1px"></div>
<div class="a " style="left:701.5px;top:87.5px;width:4.5px;height:3.5px;background:#f0f0fa"></div>
<div class="a " style="left:701px;top:93px;width:6px;height:4px;background:#8a8ac8"></div>
<div class="a " style="left:713px;top:86px;width:1px;height:12px;background:#c8ccd4"></div>
<svg style="left:719px;top:87px" width="9" height="10" viewBox="0 0 9 10"><path d="M3 0l2.500 6M6 0L3.500 6" stroke="#c2c5cc" stroke-width="1.100" fill="none"/><circle cx="2.300" cy="7.800" r="1.600" fill="none" stroke="#c2c5cc" stroke-width="1.100"/><circle cx="6.700" cy="7.800" r="1.600" fill="none" stroke="#c2c5cc" stroke-width="1.100"/></svg>
<div class="a " style="left:734px;top:87.5px;width:6px;height:7px;background:#dcdee4;border:1px solid #c6c8ce"></div>
<div class="a " style="left:738px;top:90px;width:6px;height:7px;background:#e6e8ec;border:1px solid #c6c8ce"></div>
<div class="a " style="left:750px;top:88.5px;width:9px;height:8.5px;background:#b4b02c;border:1px solid #6a6818"></div>
<div class="a " style="left:752.5px;top:87px;width:4px;height:2.5px;background:#4a4a4a"></div>
<div class="a " style="left:755px;top:91.5px;width:6.5px;height:6px;background:#e4e4ea;border:1px solid #777"></div>
<div class="a " style="left:766px;top:89.5px;width:4.5px;height:7.5px;background:#2c3a94;border-radius:2px 2px 1px 1px"></div>
<div class="a " style="left:772.5px;top:89.5px;width:4.5px;height:7.5px;background:#2c3a94;border-radius:2px 2px 1px 1px"></div>
<div class="a " style="left:768px;top:87.5px;width:2.5px;height:3px;background:#2c3a94"></div>
<div class="a " style="left:773px;top:87.5px;width:2.5px;height:3px;background:#2c3a94"></div>
<div class="a " style="left:770px;top:91px;width:3px;height:2.5px;background:#5a68b8"></div>
<div class="a " style="left:782px;top:86px;width:1px;height:12px;background:#c8ccd4"></div>
<svg style="left:787px;top:87px" width="10" height="10" viewBox="0 0 10 10"><path d="M3 3.500C5 1 9 2.500 8 6 7.500 8 6 9 4.500 9.500" fill="none" stroke="#3848b4" stroke-width="1.900"/><path d="M0 1.500l4.500 .3L1.200 5.500z" fill="#3848b4"/></svg>
<svg style="left:803px;top:87px" width="10" height="10" viewBox="0 0 10 10"><path d="M7 3.500C5 1 1 2.500 2 6 2.500 8 4 9 5.500 9.500" fill="none" stroke="#ccd0d6" stroke-width="1.900"/><path d="M10 1.500l-4.500 .3L8.800 5.500z" fill="#ccd0d6"/></svg>
<div class="a " style="left:817px;top:86px;width:1px;height:12px;background:#c8ccd4"></div>
<svg style="left:825px;top:89px" width="5" height="6.500" viewBox="0 0 5 6.500"><path d="M0 0v6.500L5 3.250z" fill="#16743a"/></svg>
<div class="a " style="left:838px;top:87.5px;width:6px;height:4px;background:#8a96b4;border:1px solid #3a4258"></div>
<div class="a " style="left:841.5px;top:90px;width:7.5px;height:5.5px;background:#dcdfe8;border:1px solid #3a4258;border-top-width:2px"></div>
<div class="a " style="left:857px;top:89px;width:2px;height:6.5px;background:#8a8ac8"></div>
<div class="a " style="left:860.5px;top:89px;width:2px;height:6.5px;background:#8a8ac8"></div>
<div class="a " style="left:872px;top:88.5px;width:7px;height:6.5px;background:linear-gradient(135deg,#8a8ad8,#5050b0)"></div>
<div class="a " style="left:888px;top:87px;width:8.5px;height:1px;background:#222"></div>
<div class="a " style="left:889px;top:89px;width:6.5px;height:1.5px;background:#46a899"></div>
<div class="a " style="left:889px;top:91.5px;width:6.5px;height:1.5px;background:#46a899"></div>
<div class="a " style="left:889px;top:94px;width:6.5px;height:1.5px;background:#46a899"></div>
<div class="a " style="left:888px;top:96.5px;width:8.5px;height:1px;background:#222"></div>
<div class="a " style="left:903px;top:87px;width:8.5px;height:1px;background:#222"></div>
<div class="a " style="left:904px;top:89px;width:6.5px;height:1.5px;background:#46a899"></div>
<div class="a " style="left:904px;top:91.5px;width:6.5px;height:1.5px;background:#46a899"></div>
<div class="a " style="left:904px;top:94px;width:6.5px;height:1.5px;background:#46a899"></div>
<div class="a " style="left:903px;top:96.5px;width:8.5px;height:1px;background:#222"></div>
<div class="a " style="left:904px;top:87.5px;width:4px;height:3px;background:#3a4ab0;border-radius:2px"></div>
<div class="a " style="left:918px;top:87.5px;width:11px;height:7.5px;background:linear-gradient(135deg,#3346a8 48%,#b8c438 52%)"></div>
<div class="a " style="left:918px;top:96px;width:11px;height:1.5px;background:#1a1a1a"></div>
<div class="a " style="left:933px;top:86px;width:1px;height:12px;background:#c8ccd4"></div>
<div class="a " style="left:939px;top:88px;width:10px;height:8px;background:linear-gradient(135deg,#6a7ac0,#2a3a88);border-radius:2px;transform:rotate(-18deg)"></div>
<div class="a " style="left:945px;top:87px;width:3px;height:3px;background:#c8c038;border-radius:1px"></div>
<div class="a " style="left:954px;top:89px;width:11.5px;height:8px;background:#d4d8e4;border:1px solid #4a5678"></div>
<div class="a " style="left:956px;top:87.5px;width:7px;height:3px;background:#a8b838;border:1px solid #5a6420"></div>
<div class="a " style="left:971px;top:90px;width:10px;height:7px;background:#b4c034;border:1px solid #6a7420;border-radius:1px"></div>
<div class="a " style="left:972px;top:87px;width:2.5px;height:3px;background:#1a1a1a;border-radius:1px"></div>
<div class="a " style="left:977.5px;top:87px;width:2.5px;height:3px;background:#1a1a1a;border-radius:1px"></div>
<div class="a " style="left:974.5px;top:89px;width:3px;height:2px;background:#d8e060"></div>
<div class="a " style="left:988px;top:88.5px;width:9px;height:7.5px;background:#d8dae0;border-radius:2px"></div>
<div class="a " style="left:1001px;top:86px;width:1px;height:12px;background:#c8ccd4"></div>
<div class="a " style="left:1006px;top:86px;width:12px;height:12px;background:radial-gradient(circle at 40% 32%,#a0aae8,#5060c0 50%,#3040a0 85%);border-radius:6px"></div>
<div class="t vu" style="left:1009.5px;top:87.5px;font-size:9.500px;font-weight:bold;color:#fff">?</div>
<div class="a " style="left:1103px;top:85px;width:6px;height:16px;background:#c9c9c9;border:1px solid #9a9a9a"></div>
<svg style="left:1104px;top:95px" width="4" height="3" viewBox="0 0 4 3"><path d="M0 0h4L2 3z" fill="#222"/></svg>
<div class="a " style="left:650px;top:101px;width:113px;height:12px;background:#b9c0cd"></div>
<div class="t vu" style="left:651px;top:103px;font-size:8.600px;color:#5c6472;letter-spacing:-0.250px">プロジェクト - VBAProject</div>
<div class="a " style="left:764px;top:102px;width:12px;height:11px;background:#fafafa;border:1px solid #999;border-right-color:#444;border-bottom-color:#444"></div>
<svg style="left:766px;top:104px" width="7" height="7" viewBox="0 0 7 7"><path d="M.8 .8l5.400 5.400M6.200 .8L.8 6.200" stroke="#000" stroke-width="1.600"/></svg>
<div class="a " style="left:650px;top:113px;width:127px;height:19px;background:#f2f3f7"></div>
<div class="a " style="left:655px;top:118px;width:10px;height:9px;background:#dfe1ee;border:1px solid #6a6a8a"></div>
<div class="a " style="left:655px;top:118px;width:10px;height:2px;background:#7a7aa8"></div>
<div class="a " style="left:671px;top:118px;width:10px;height:9px;background:#e0e0e0;border:1px solid #c0c0c0"></div>
<div class="a " style="left:687px;top:115px;width:17px;height:15px;background:#fdfdff;border:1px solid #8aa0d0"></div>
<div class="a " style="left:690px;top:119px;width:11px;height:8px;background:#d8cc50;border:1px solid #807820"></div>
<div class="a " style="left:690px;top:118px;width:5px;height:2px;background:#d8cc50"></div>
<div class="a " style="left:769px;top:115px;width:7px;height:16px;background:#c9c9c9;border:1px solid #9a9a9a"></div>
<svg style="left:770px;top:126px" width="5" height="3" viewBox="0 0 5 3"><path d="M0 0h5L2.500 3z" fill="#222"/></svg>
<div class="a " style="left:650px;top:132px;width:127px;height:417px;background:#fbfbfd;border:1px solid #8a8f98"></div>
<div class="a " style="left:655px;top:146px;width:1px;height:3px;background:#999"></div>
<div class="a " style="left:671px;top:157px;width:1px;height:155px;background:repeating-linear-gradient(180deg,#9a9a9a 0,#9a9a9a 1px,transparent 1px,transparent 2px)"></div>
<div class="a " style="left:685px;top:167px;width:1px;height:112px;background:repeating-linear-gradient(180deg,#9a9a9a 0,#9a9a9a 1px,transparent 1px,transparent 2px)"></div>
<div class="a " style="left:685px;top:295px;width:1px;height:17px;background:repeating-linear-gradient(180deg,#9a9a9a 0,#9a9a9a 1px,transparent 1px,transparent 2px)"></div>
<div class="a " style="left:651px;top:137px;width:8px;height:8px;background:#fcfcfc;border:1px solid #a4a4a8"></div>
<div class="a " style="left:653px;top:140.5px;width:4px;height:1px;background:#555"></div>
<div class="a " style="left:667px;top:147px;width:8px;height:8px;background:#fcfcfc;border:1px solid #a4a4a8"></div>
<div class="a " style="left:669px;top:150.5px;width:4px;height:1px;background:#555"></div>
<div class="a " style="left:667px;top:286px;width:8px;height:8px;background:#fcfcfc;border:1px solid #a4a4a8"></div>
<div class="a " style="left:669px;top:289.5px;width:4px;height:1px;background:#555"></div>
<div class="a " style="left:660px;top:140px;width:5px;height:1px;background:#999"></div>
<svg style="left:665px;top:134px" width="12" height="12" viewBox="0 0 12 12"><path d="M2 8l4-5 4 3-3 5z" fill="#3a3a44"/><circle cx="8.500" cy="3" r="1.800" fill="#3a2a2e"/><circle cx="3" cy="7.500" r="1.800" fill="#2e3a32"/><circle cx="9" cy="9.500" r="1.600" fill="#45432e"/></svg>
<div class="t vu" style="left:679px;top:135px;font-size:8.800px;font-weight:bold;color:#111;letter-spacing:-0.100px;width:97px;overflow:hidden">VBAProject (taiken03_mihon.xls)</div>
<div class="a " style="left:679px;top:148px;width:11px;height:7px;background:linear-gradient(#b4dc70,#98c458);border:1px solid #5e7e34;border-radius:1px"></div>
<div class="a " style="left:679px;top:146px;width:5px;height:2.5px;background:#a4cc64;border:1px solid #5e7e34"></div>
<div class="a " style="left:679px;top:287px;width:11px;height:7px;background:linear-gradient(#b4dc70,#98c458);border:1px solid #5e7e34;border-radius:1px"></div>
<div class="a " style="left:679px;top:285px;width:5px;height:2.5px;background:#a4cc64;border:1px solid #5e7e34"></div>
<div class="t vu" style="left:693px;top:146.47px;font-size:8.600px;color:#111;letter-spacing:-0.200px;width:83px;overflow:hidden">Microsoft Excel Objects</div>
<div class="a " style="left:686px;top:162px;width:6px;height:1px;background:repeating-linear-gradient(90deg,#999 0,#999 1px,transparent 1px,transparent 2px)"></div>
<div class="a " style="left:695px;top:159px;width:9px;height:8px;background:#f4f4f6;border:1px solid #333"></div>
<div class="a " style="left:693px;top:158px;width:8px;height:6.5px;background:#26262a"></div>
<div class="a " style="left:694px;top:160px;width:6px;height:0.7px;background:#8a8a90"></div>
<div class="a " style="left:694px;top:162px;width:6px;height:0.7px;background:#8a8a90"></div>
<div class="a " style="left:696px;top:159px;width:0.7px;height:5px;background:#8a8a90"></div>
<div class="a " style="left:698.5px;top:159px;width:0.7px;height:5px;background:#8a8a90"></div>
<div class="t vu" style="left:707px;top:157.14000000000001px;font-size:8.600px;color:#111;letter-spacing:-0.350px">Sheet1 (type1-1)</div>
<div class="a " style="left:686px;top:173px;width:6px;height:1px;background:repeating-linear-gradient(90deg,#999 0,#999 1px,transparent 1px,transparent 2px)"></div>
<div class="a " style="left:695px;top:170px;width:9px;height:8px;background:#f4f4f6;border:1px solid #333"></div>
<div class="a " style="left:693px;top:169px;width:8px;height:6.5px;background:#26262a"></div>
<div class="a " style="left:694px;top:171px;width:6px;height:0.7px;background:#8a8a90"></div>
<div class="a " style="left:694px;top:173px;width:6px;height:0.7px;background:#8a8a90"></div>
<div class="a " style="left:696px;top:170px;width:0.7px;height:5px;background:#8a8a90"></div>
<div class="a " style="left:698.5px;top:170px;width:0.7px;height:5px;background:#8a8a90"></div>
<div class="t vu" style="left:707px;top:167.81px;font-size:8.600px;color:#111;letter-spacing:-0.350px">Sheet10 (type1-5)</div>
<div class="a " style="left:686px;top:183px;width:6px;height:1px;background:repeating-linear-gradient(90deg,#999 0,#999 1px,transparent 1px,transparent 2px)"></div>
<div class="a " style="left:695px;top:180px;width:9px;height:8px;background:#f4f4f6;border:1px solid #333"></div>
<div class="a " style="left:693px;top:179px;width:8px;height:6.5px;background:#26262a"></div>
<div class="a " style="left:694px;top:181px;width:6px;height:0.7px;background:#8a8a90"></div>
<div class="a " style="left:694px;top:183px;width:6px;height:0.7px;background:#8a8a90"></div>
<div class="a " style="left:696px;top:180px;width:0.7px;height:5px;background:#8a8a90"></div>
<div class="a " style="left:698.5px;top:180px;width:0.7px;height:5px;background:#8a8a90"></div>
<div class="t vu" style="left:707px;top:178.48000000000002px;font-size:8.600px;color:#111;letter-spacing:-0.350px">Sheet11 (type2-5)</div>
<div class="a " style="left:686px;top:194px;width:6px;height:1px;background:repeating-linear-gradient(90deg,#999 0,#999 1px,transparent 1px,transparent 2px)"></div>
<div class="a " style="left:695px;top:191px;width:9px;height:8px;background:#f4f4f6;border:1px solid #333"></div>
<div class="a " style="left:693px;top:190px;width:8px;height:6.5px;background:#26262a"></div>
<div class="a " style="left:694px;top:192px;width:6px;height:0.7px;background:#8a8a90"></div>
<div class="a " style="left:694px;top:194px;width:6px;height:0.7px;background:#8a8a90"></div>
<div class="a " style="left:696px;top:191px;width:0.7px;height:5px;background:#8a8a90"></div>
<div class="a " style="left:698.5px;top:191px;width:0.7px;height:5px;background:#8a8a90"></div>
<div class="t vu" style="left:707px;top:189.15px;font-size:8.600px;color:#111;letter-spacing:-0.350px">Sheet2 (type0)</div>
<div class="a " style="left:686px;top:205px;width:6px;height:1px;background:repeating-linear-gradient(90deg,#999 0,#999 1px,transparent 1px,transparent 2px)"></div>
<div class="a " style="left:695px;top:202px;width:9px;height:8px;background:#f4f4f6;border:1px solid #333"></div>
<div class="a " style="left:693px;top:201px;width:8px;height:6.5px;background:#26262a"></div>
<div class="a " style="left:694px;top:203px;width:6px;height:0.7px;background:#8a8a90"></div>
<div class="a " style="left:694px;top:205px;width:6px;height:0.7px;background:#8a8a90"></div>
<div class="a " style="left:696px;top:202px;width:0.7px;height:5px;background:#8a8a90"></div>
<div class="a " style="left:698.5px;top:202px;width:0.7px;height:5px;background:#8a8a90"></div>
<div class="t vu" style="left:707px;top:199.82px;font-size:8.600px;color:#111;letter-spacing:-0.350px">Sheet3 (type2-1)</div>
<div class="a " style="left:686px;top:215px;width:6px;height:1px;background:repeating-linear-gradient(90deg,#999 0,#999 1px,transparent 1px,transparent 2px)"></div>
<div class="a " style="left:695px;top:212px;width:9px;height:8px;background:#f4f4f6;border:1px solid #333"></div>
<div class="a " style="left:693px;top:211px;width:8px;height:6.5px;background:#26262a"></div>
<div class="a " style="left:694px;top:213px;width:6px;height:0.7px;background:#8a8a90"></div>
<div class="a " style="left:694px;top:215px;width:6px;height:0.7px;background:#8a8a90"></div>
<div class="a " style="left:696px;top:212px;width:0.7px;height:5px;background:#8a8a90"></div>
<div class="a " style="left:698.5px;top:212px;width:0.7px;height:5px;background:#8a8a90"></div>
<div class="t vu" style="left:707px;top:210.49px;font-size:8.600px;color:#111;letter-spacing:-0.350px">Sheet4 (type1-2)</div>
<div class="a " style="left:686px;top:226px;width:6px;height:1px;background:repeating-linear-gradient(90deg,#999 0,#999 1px,transparent 1px,transparent 2px)"></div>
<div class="a " style="left:695px;top:223px;width:9px;height:8px;background:#f4f4f6;border:1px solid #333"></div>
<div class="a " style="left:693px;top:222px;width:8px;height:6.5px;background:#26262a"></div>
<div class="a " style="left:694px;top:224px;width:6px;height:0.7px;background:#8a8a90"></div>
<div class="a " style="left:694px;top:226px;width:6px;height:0.7px;background:#8a8a90"></div>
<div class="a " style="left:696px;top:223px;width:0.7px;height:5px;background:#8a8a90"></div>
<div class="a " style="left:698.5px;top:223px;width:0.7px;height:5px;background:#8a8a90"></div>
<div class="t vu" style="left:707px;top:221.16000000000003px;font-size:8.600px;color:#111;letter-spacing:-0.350px">Sheet5 (type2-2)</div>
<div class="a " style="left:686px;top:237px;width:6px;height:1px;background:repeating-linear-gradient(90deg,#999 0,#999 1px,transparent 1px,transparent 2px)"></div>
<div class="a " style="left:695px;top:234px;width:9px;height:8px;background:#f4f4f6;border:1px solid #333"></div>
<div class="a " style="left:693px;top:233px;width:8px;height:6.5px;background:#26262a"></div>
<div class="a " style="left:694px;top:235px;width:6px;height:0.7px;background:#8a8a90"></div>
<div class="a " style="left:694px;top:237px;width:6px;height:0.7px;background:#8a8a90"></div>
<div class="a " style="left:696px;top:234px;width:0.7px;height:5px;background:#8a8a90"></div>
<div class="a " style="left:698.5px;top:234px;width:0.7px;height:5px;background:#8a8a90"></div>
<div class="t vu" style="left:707px;top:231.83px;font-size:8.600px;color:#111;letter-spacing:-0.350px">Sheet6 (type1-3)</div>
<div class="a " style="left:686px;top:248px;width:6px;height:1px;background:repeating-linear-gradient(90deg,#999 0,#999 1px,transparent 1px,transparent 2px)"></div>
<div class="a " style="left:695px;top:245px;width:9px;height:8px;background:#f4f4f6;border:1px solid #333"></div>
<div class="a " style="left:693px;top:244px;width:8px;height:6.5px;background:#26262a"></div>
<div class="a " style="left:694px;top:246px;width:6px;height:0.7px;background:#8a8a90"></div>
<div class="a " style="left:694px;top:248px;width:6px;height:0.7px;background:#8a8a90"></div>
<div class="a " style="left:696px;top:245px;width:0.7px;height:5px;background:#8a8a90"></div>
<div class="a " style="left:698.5px;top:245px;width:0.7px;height:5px;background:#8a8a90"></div>
<div class="t vu" style="left:707px;top:242.5px;font-size:8.600px;color:#111;letter-spacing:-0.350px">Sheet7 (type2-3)</div>
<div class="a " style="left:686px;top:258px;width:6px;height:1px;background:repeating-linear-gradient(90deg,#999 0,#999 1px,transparent 1px,transparent 2px)"></div>
<div class="a " style="left:695px;top:255px;width:9px;height:8px;background:#f4f4f6;border:1px solid #333"></div>
<div class="a " style="left:693px;top:254px;width:8px;height:6.5px;background:#26262a"></div>
<div class="a " style="left:694px;top:256px;width:6px;height:0.7px;background:#8a8a90"></div>
<div class="a " style="left:694px;top:258px;width:6px;height:0.7px;background:#8a8a90"></div>
<div class="a " style="left:696px;top:255px;width:0.7px;height:5px;background:#8a8a90"></div>
<div class="a " style="left:698.5px;top:255px;width:0.7px;height:5px;background:#8a8a90"></div>
<div class="t vu" style="left:707px;top:253.17000000000002px;font-size:8.600px;color:#111;letter-spacing:-0.350px">Sheet8 (type1-4)</div>
<div class="a " style="left:686px;top:269px;width:6px;height:1px;background:repeating-linear-gradient(90deg,#999 0,#999 1px,transparent 1px,transparent 2px)"></div>
<div class="a " style="left:695px;top:266px;width:9px;height:8px;background:#f4f4f6;border:1px solid #333"></div>
<div class="a " style="left:693px;top:265px;width:8px;height:6.5px;background:#26262a"></div>
<div class="a " style="left:694px;top:267px;width:6px;height:0.7px;background:#8a8a90"></div>
<div class="a " style="left:694px;top:269px;width:6px;height:0.7px;background:#8a8a90"></div>
<div class="a " style="left:696px;top:266px;width:0.7px;height:5px;background:#8a8a90"></div>
<div class="a " style="left:698.5px;top:266px;width:0.7px;height:5px;background:#8a8a90"></div>
<div class="t vu" style="left:707px;top:263.84000000000003px;font-size:8.600px;color:#111;letter-spacing:-0.350px">Sheet9 (type2-4)</div>
<div class="a " style="left:686px;top:280px;width:6px;height:1px;background:repeating-linear-gradient(90deg,#999 0,#999 1px,transparent 1px,transparent 2px)"></div>
<div class="a " style="left:694px;top:275px;width:8px;height:10px;background:#fff;border:1px solid #333"></div>
<div class="a " style="left:692px;top:280px;width:5px;height:4px;background:#2a7a4a"></div>
<div class="t vu" style="left:707px;top:274.51px;font-size:8.600px;color:#111;letter-spacing:-0.350px">ThisWorkbook</div>
<div class="t vu" style="left:693px;top:285.18px;font-size:8.600px;color:#111;letter-spacing:-1.400px">標準モジュール</div>
<div class="a " style="left:686px;top:301px;width:6px;height:1px;background:repeating-linear-gradient(90deg,#999 0,#999 1px,transparent 1px,transparent 2px)"></div>
<svg style="left:692px;top:296px" width="12" height="10" viewBox="0 0 12 10"><path d="M2 7l4-4 4 2-3 4z" fill="#3a3a40"/><circle cx="8.500" cy="2.500" r="1.700" fill="#2a2a2e"/><circle cx="3" cy="6" r="1.700" fill="#3a3a3e"/><circle cx="9" cy="8" r="1.500" fill="#2e2e32"/></svg>
<div class="t vu" style="left:707px;top:295.85px;font-size:8.600px;color:#111;letter-spacing:-0.350px">Module1</div>
<div class="a " style="left:686px;top:312px;width:6px;height:1px;background:repeating-linear-gradient(90deg,#999 0,#999 1px,transparent 1px,transparent 2px)"></div>
<svg style="left:692px;top:307px" width="12" height="10" viewBox="0 0 12 10"><path d="M2 7l4-4 4 2-3 4z" fill="#3a3a40"/><circle cx="8.500" cy="2.500" r="1.700" fill="#2a2a2e"/><circle cx="3" cy="6" r="1.700" fill="#3a3a3e"/><circle cx="9" cy="8" r="1.500" fill="#2e2e32"/></svg>
<div class="t vu" style="left:707px;top:306.52px;font-size:8.600px;color:#111;letter-spacing:-0.350px">renzoku</div>
<div class="a " style="left:650px;top:549px;width:127px;height:11px;background:#efeff2"></div>
<div class="a " style="left:663px;top:549px;width:75px;height:10px;background:linear-gradient(#f4f4f4,#dcdcdc 50%,#cfcfcf);border:1px solid #9a9a9a;border-radius:2px"></div>
<div class="a " style="left:698px;top:552px;width:1px;height:4px;background:#777"></div>
<div class="a " style="left:700px;top:552px;width:1px;height:4px;background:#777"></div>
<div class="a " style="left:702px;top:552px;width:1px;height:4px;background:#777"></div>
<svg style="left:655px;top:551px" width="4" height="6" viewBox="0 0 4 6"><path d="M4 0v6L0 3z" fill="#444"/></svg>
<svg style="left:768px;top:551px" width="4" height="6" viewBox="0 0 4 6"><path d="M0 0v6L4 3z" fill="#444"/></svg>
<div class="a " style="left:777px;top:101px;width:5px;height:459px;background:#e4e6ec"></div>
<div class="a " style="left:782px;top:101px;width:327px;height:459px;background:#f2f3f7"></div>
<div class="a " style="left:789px;top:104px;width:152px;height:12px;background:#fff;border:1px solid #6a6a6a;border-right-color:#d0d0d0;border-bottom-color:#d0d0d0;box-shadow:0 0 0 1px #a0a0a0"></div>
<div class="t vu" style="left:792px;top:105px;font-size:8.800px;font-weight:bold;color:#111;letter-spacing:-0.200px">(General)</div>
<div class="a " style="left:929px;top:105px;width:11px;height:10px;background:#f0f0f0;border:1px solid #fff;border-right-color:#555;border-bottom-color:#555"></div>
<svg style="left:932px;top:109px" width="5" height="3" viewBox="0 0 5 3"><path d="M0 0h5L2.500 3z" fill="#111"/></svg>
<div class="a " style="left:948px;top:104px;width:151px;height:12px;background:#fff;border:1px solid #6a6a6a;border-right-color:#d0d0d0;border-bottom-color:#d0d0d0;box-shadow:0 0 0 1px #a0a0a0"></div>
<div class="t vu" style="left:951px;top:105px;font-size:8.800px;font-weight:bold;color:#111;letter-spacing:-0.100px">renzoku</div>
<div class="a " style="left:1087px;top:105px;width:11px;height:10px;background:#f0f0f0;border:1px solid #fff;border-right-color:#555;border-bottom-color:#555"></div>
<svg style="left:1090px;top:109px" width="5" height="3" viewBox="0 0 5 3"><path d="M0 0h5L2.500 3z" fill="#111"/></svg>
<div class="a " style="left:783px;top:118px;width:325px;height:441px;background:#fcfcfd;border:1px solid #555;border-right-color:#ddd;border-bottom-color:#ddd"></div>
<div class="a " style="left:784px;top:119px;width:13px;height:427px;background:#e4e4e8;border-right:1px solid #bdbdc4"></div>
<div class="a " style="left:798px;top:133px;width:297px;height:1px;background:#9a9a9a"></div>
<div class="a " style="left:798px;top:171px;width:297px;height:1px;background:#9a9a9a"></div>
<div class="a " style="left:798px;top:412px;width:297px;height:1px;background:#9a9a9a"></div>
<div class="a " style="left:806px;top:146px;width:1px;height:12px;background:#222"></div>
<div class="a " style="left:797px;top:119px;width:298px;height:427px;overflow:hidden"><div class="t code" style="left:9px;top:3.06px;font-size:11.45px;transform:scaleY(1.23);transform-origin:0 50%"><span style="color:#4e4e54">Option Explicit</span></div><div class="t code" style="left:9px;top:15.74px;font-size:11.45px;transform:scaleY(1.23);transform-origin:0 50%"><span style="color:#4e4e54">Sub </span><span style="color:#cb55b4">renzoku</span><span style="color:#4e4e54">()</span></div><div class="t code" style="left:9px;top:28.42px;font-size:11.45px;transform:scaleY(1.23);transform-origin:0 50%"></div><div class="t code" style="left:9px;top:41.10px;font-size:11.45px;transform:scaleY(1.23);transform-origin:0 50%"><span style="color:#4e4e54">End Sub</span></div><div class="t code" style="left:9px;top:53.78px;font-size:11.45px;transform:scaleY(1.23);transform-origin:0 50%"></div><div class="t code" style="left:9px;top:66.46px;font-size:11.45px;transform:scaleY(1.23);transform-origin:0 50%"><span style="color:#4e4e54">Sub </span><span style="color:#cb55b4">ma</span><span style="color:#4e4e54">()</span></div><div class="t code" style="left:9px;top:79.14px;font-size:11.45px;transform:scaleY(1.23);transform-origin:0 50%"><span style="color:#3a9463">'</span></div><div class="t code" style="left:9px;top:91.82px;font-size:11.45px;transform:scaleY(1.23);transform-origin:0 50%"><span style="color:#3a9463">' </span><span style="color:#cb55b4">ma</span><span style="color:#3a9463"> Macro</span></div><div class="t code" style="left:9px;top:104.50px;font-size:11.45px;transform:scaleY(1.23);transform-origin:0 50%"><span style="color:#3a9463">'</span></div><div class="t code" style="left:9px;top:117.18px;font-size:11.45px;transform:scaleY(1.23);transform-origin:0 50%"></div><div class="t code" style="left:9px;top:129.86px;font-size:11.45px;transform:scaleY(1.23);transform-origin:0 50%"><span style="color:#3a9463">'</span></div><div class="t code" style="left:9px;top:142.54px;font-size:11.45px;transform:scaleY(1.23);transform-origin:0 50%">    <span style="color:#cb55b4">ActiveWorkbook.Worksheets</span><span style="color:#4e4e54">(&quot;type1-1&quot;).</span><span style="color:#cb55b4">Sort.SortFields.Clear</span></div><div class="t code" style="left:9px;top:155.22px;font-size:11.45px;transform:scaleY(1.23);transform-origin:0 50%">    <span style="color:#cb55b4">ActiveWorkbook.Worksheets</span><span style="color:#4e4e54">(&quot;type1-1&quot;).</span><span style="color:#cb55b4">Sort.SortFields.Add</span></div><div class="t code" style="left:9px;top:167.90px;font-size:11.45px;transform:scaleY(1.23);transform-origin:0 50%">        <span style="color:#cb55b4">SortOn:=xlSortOnValues, Order:=xlAscending</span></div><div class="t code" style="left:9px;top:180.58px;font-size:11.45px;transform:scaleY(1.23);transform-origin:0 50%">    <span style="color:#4e4e54">With </span><span style="color:#cb55b4">ActiveWorkbook.Worksheets</span><span style="color:#4e4e54">(&quot;type1-1&quot;).</span><span style="color:#cb55b4">Sort</span></div><div class="t code" style="left:9px;top:193.26px;font-size:11.45px;transform:scaleY(1.23);transform-origin:0 50%">        <span style="color:#cb55b4">.SetRange Range</span><span style="color:#4e4e54">(&quot;A2:H21&quot;)</span></div><div class="t code" style="left:9px;top:205.94px;font-size:11.45px;transform:scaleY(1.23);transform-origin:0 50%">        <span style="color:#cb55b4">.Header</span><span style="color:#4e4e54"> = </span><span style="color:#cb55b4">xlNo</span></div><div class="t code" style="left:9px;top:218.62px;font-size:11.45px;transform:scaleY(1.23);transform-origin:0 50%">        <span style="color:#cb55b4">.MatchCase</span><span style="color:#4e4e54"> = False</span></div><div class="t code" style="left:9px;top:231.30px;font-size:11.45px;transform:scaleY(1.23);transform-origin:0 50%">        <span style="color:#cb55b4">.Orientation</span><span style="color:#4e4e54"> = </span><span style="color:#cb55b4">xlTopToBottom</span></div><div class="t code" style="left:9px;top:243.98px;font-size:11.45px;transform:scaleY(1.23);transform-origin:0 50%">        <span style="color:#cb55b4">.SortMethod</span><span style="color:#4e4e54"> = </span><span style="color:#cb55b4">xlPinYin</span></div><div class="t code" style="left:9px;top:256.66px;font-size:11.45px;transform:scaleY(1.23);transform-origin:0 50%">        <span style="color:#cb55b4">.Apply</span></div><div class="t code" style="left:9px;top:269.34px;font-size:11.45px;transform:scaleY(1.23);transform-origin:0 50%">    <span style="color:#4e4e54">End With</span></div><div class="t code" style="left:9px;top:282.02px;font-size:11.45px;transform:scaleY(1.23);transform-origin:0 50%"><span style="color:#4e4e54">End Sub</span></div><div class="t code" style="left:9px;top:294.70px;font-size:11.45px;transform:scaleY(1.23);transform-origin:0 50%"><span style="color:#4e4e54">Sub </span><span style="color:#cb55b4">mb</span><span style="color:#4e4e54">()</span></div><div class="t code" style="left:9px;top:307.38px;font-size:11.45px;transform:scaleY(1.23);transform-origin:0 50%"><span style="color:#3a9463">'</span></div><div class="t code" style="left:9px;top:320.06px;font-size:11.45px;transform:scaleY(1.23);transform-origin:0 50%"><span style="color:#3a9463">' </span><span style="color:#cb55b4">mb</span><span style="color:#3a9463"> Macro</span></div><div class="t code" style="left:9px;top:332.74px;font-size:11.45px;transform:scaleY(1.23);transform-origin:0 50%"><span style="color:#3a9463">'</span></div><div class="t code" style="left:9px;top:345.42px;font-size:11.45px;transform:scaleY(1.23);transform-origin:0 50%"></div><div class="t code" style="left:9px;top:358.10px;font-size:11.45px;transform:scaleY(1.23);transform-origin:0 50%"><span style="color:#3a9463">'</span></div><div class="t code" style="left:9px;top:370.78px;font-size:11.45px;transform:scaleY(1.23);transform-origin:0 50%">    <span style="color:#cb55b4">Range</span><span style="color:#4e4e54">(&quot;H2&quot;)</span><span style="color:#cb55b4">.Select</span></div><div class="t code" style="left:9px;top:383.46px;font-size:11.45px;transform:scaleY(1.23);transform-origin:0 50%">    <span style="color:#cb55b4">ActiveCell.FormulaR1C1</span><span style="color:#4e4e54"> = &quot;1&quot;</span></div><div class="t code" style="left:9px;top:396.14px;font-size:11.45px;transform:scaleY(1.23);transform-origin:0 50%">    <span style="color:#cb55b4">Range</span><span style="color:#4e4e54">(&quot;H3&quot;)</span><span style="color:#cb55b4">.Select</span></div><div class="t code" style="left:9px;top:408.82px;font-size:11.45px;transform:scaleY(1.23);transform-origin:0 50%">    <span style="color:#cb55b4">ActiveCell.FormulaR1C1</span><span style="color:#4e4e54"> = &quot;2&quot;</span></div></div>
<div class="a " style="left:1096px;top:119px;width:11px;height:427px;background:#ececf0"></div>
<div class="a " style="left:1096px;top:122px;width:10px;height:11px;background:#f0f0f0;border:1px solid #fff;border-right-color:#555;border-bottom-color:#555"></div>
<svg style="left:1099px;top:126px" width="5" height="3" viewBox="0 0 5 3"><path d="M0 3h5L2.500 0z" fill="#111"/></svg>
<div class="a " style="left:1096px;top:133px;width:10px;height:226px;background:#f8f8fa;border:1px solid #fff;border-right-color:#666;border-bottom-color:#666"></div>
<div class="a " style="left:1096px;top:535px;width:10px;height:11px;background:#f0f0f0;border:1px solid #fff;border-right-color:#555;border-bottom-color:#555"></div>
<svg style="left:1099px;top:539px" width="5" height="3" viewBox="0 0 5 3"><path d="M0 0h5L2.500 3z" fill="#111"/></svg>
<div class="a " style="left:784px;top:546px;width:323px;height:12px;background:#ececf0"></div>
<div class="a " style="left:785px;top:547px;width:9px;height:10px;background:#f4f4f4;border:1px solid #fff;border-right-color:#555;border-bottom-color:#555"></div>
<div class="a " style="left:787px;top:550px;width:5px;height:1px;background:#111"></div>
<div class="a " style="left:787px;top:553px;width:5px;height:1px;background:#111"></div>
<div class="a " style="left:795px;top:547px;width:10px;height:10px;background:#fff;border:1px solid #555;border-right-color:#fff;border-bottom-color:#fff"></div>
<div class="a " style="left:797px;top:549px;width:6px;height:1px;background:#111"></div>
<div class="a " style="left:797px;top:551px;width:6px;height:1px;background:#111"></div>
<div class="a " style="left:797px;top:553px;width:6px;height:1px;background:#111"></div>
<div class="a " style="left:797px;top:555px;width:6px;height:1px;background:#111"></div>
<div class="a " style="left:806px;top:547px;width:10px;height:10px;background:#f0f0f0;border:1px solid #fff;border-right-color:#555;border-bottom-color:#555"></div>
<svg style="left:809px;top:549px" width="3" height="5" viewBox="0 0 3 5"><path d="M3 0v5L0 2.500z" fill="#111"/></svg>
<div class="a " style="left:816px;top:547px;width:10px;height:10px;background:#f8f8fa;border:1px solid #fff;border-right-color:#555;border-bottom-color:#555"></div>
<div class="a " style="left:1086px;top:547px;width:10px;height:10px;background:#f0f0f0;border:1px solid #fff;border-right-color:#555;border-bottom-color:#555"></div>
<svg style="left:1090px;top:549px" width="3" height="5" viewBox="0 0 3 5"><path d="M0 0v5L3 2.500z" fill="#111"/></svg>
<div class="a " style="left:1096px;top:546px;width:11px;height:12px;background:#f0f0f0"></div>
<svg style="left:852px;top:510px;z-index:60" width="10" height="15" viewBox="0 0 10 15"><path d="M.5 .5v11.500l2.800-2.600 2 4.600 1.800-.8-2-4.400h3.900z" fill="#fff" stroke="#000" stroke-width="0.900"/></svg>
<div class="a " style="left:11px;top:600px;width:1110px;height:20px;background:linear-gradient(#26323e 0,#121a22 2px,#0a0e13 9px,#040608 100%)"></div>
<div class="a " style="left:11px;top:600px;width:1110px;height:1px;background:#3c4a58"></div>
<div class="a " style="left:15px;top:596px;width:26px;height:26px;border-radius:13px;background:radial-gradient(circle at 50% 30%,#8cc8f8 0,#3a8ce0 35%,#1458b4 60%,#0a2c6c 85%,#061a40 100%);box-shadow:0 0 3px #6ab0ff"></div>
<div class="a " style="left:21px;top:602px;width:6.5px;height:6.5px;background:#ec6c2c;border-radius:3px 0 0 0;transform:skewY(-9deg)"></div>
<div class="a " style="left:28.5px;top:601px;width:6.5px;height:6.5px;background:#98cc40;border-radius:0 3px 0 0;transform:skewY(-9deg)"></div>
<div class="a " style="left:21px;top:609.5px;width:6.5px;height:6.5px;background:#44a8ec;border-radius:0 0 0 3px;transform:skewY(-9deg)"></div>
<div class="a " style="left:28.5px;top:608.5px;width:6.5px;height:6.5px;background:#f8cc20;border-radius:0 0 3px 0;transform:skewY(-9deg)"></div>
<div class="a " style="left:17px;top:597px;width:22px;height:10px;border-radius:11px 11px 6px 6px;background:linear-gradient(rgba(255,255,255,.450),rgba(255,255,255,0))"></div>
<div class="a " style="left:62px;top:601px;width:30px;height:18px;background:linear-gradient(135deg,#7a848c,#3c464e 40%,#141a20 55%,#2c363e);border:1px solid #7a868e;border-radius:2px"></div>
<div class="a " style="left:94px;top:601px;width:30px;height:18px;background:linear-gradient(135deg,#c4ccd0,#8c989e 45%,#66727a 55%,#8a969c);border:1px solid #7a868e;border-radius:2px"></div>
<div class="a " style="left:126px;top:601px;width:30px;height:18px;background:linear-gradient(135deg,#7a848c,#3c464e 40%,#141a20 55%,#2c363e);border:1px solid #7a868e;border-radius:2px"></div>
<div class="a " style="left:122px;top:601px;width:2px;height:18px;background:#7a868e"></div>
<div class="a " style="left:71px;top:604px;width:12px;height:12px;border-radius:6px;background:conic-gradient(from -60deg,#e84234 0 120deg,#f8bc08 120deg 240deg,#34a654 240deg 360deg)"></div>
<div class="a " style="left:74.5px;top:607.5px;width:5px;height:5px;border-radius:3px;background:#4a8af4;border:1px solid #fff"></div>
<div class="a " style="left:101px;top:605px;width:7px;height:10px;background:#1e7145"></div>
<div class="t vu" style="left:102px;top:606px;font-size:8px;font-weight:bold;color:#fff">X</div>
<div class="a " style="left:108px;top:606px;width:6px;height:8px;background:#f4f8f4;border:1px solid #1e7145"></div>
<div class="a " style="left:109px;top:608px;width:4px;height:1px;background:#1e7145"></div>
<div class="a " style="left:109px;top:610px;width:4px;height:1px;background:#1e7145"></div>
<div class="a " style="left:134px;top:604px;width:13px;height:11px;background:linear-gradient(135deg,#58b8f8,#1c6cd4);border-radius:3px"></div>
<div class="a " style="left:137px;top:607px;width:7px;height:4px;background:#e8f4ff;border-radius:1px"></div>
<div class="a " style="left:143px;top:610px;width:4px;height:4px;background:#9ab4c8;border-radius:2px"></div>
<div class="a " style="left:725px;top:604px;width:12px;height:12px;background:#f4f4f4;border:1px solid #ddd"></div>
<div class="t vu" style="left:727px;top:604px;font-size:11px;font-weight:bold;color:#d02818;font-style:italic">A</div>
<div class="a " style="left:741px;top:607px;width:6px;height:6px;background:#e8e8e8;border-radius:3px"></div>
<div class="a " style="left:751px;top:602px;width:14px;height:16px;background:#3a4046;border-right:1px solid #1a1e22"></div>
<div class="t vu" style="left:752px;top:604px;font-size:11.500px;color:#e8e8e8">あ</div>
<div class="a " style="left:765px;top:602px;width:14px;height:16px;background:#3a4046;border-right:1px solid #1a1e22"></div>
<div class="t vu" style="left:766px;top:604px;font-size:11.500px;color:#e8e8e8">連</div>
<div class="a " style="left:779px;top:602px;width:14px;height:16px;background:#3a4046;border-right:1px solid #1a1e22"></div>
<div class="t vu" style="left:782px;top:604px;font-size:11.500px;color:#e8e8e8">R</div>
<div class="a " style="left:793px;top:602px;width:14px;height:16px;background:#3a4046;border-right:1px solid #1a1e22"></div>
<div class="t vu" style="left:794px;top:604px;font-size:11.500px;color:#e8e8e8">般</div>
<div class="a " style="left:809px;top:605px;width:10px;height:9px;background:#d8e0f0;border:1px solid #4a5aa0"></div>
<div class="a " style="left:810px;top:607px;width:8px;height:1px;background:#4a5aa0"></div>
<div class="a " style="left:810px;top:609px;width:8px;height:1px;background:#4a5aa0"></div>
<div class="a " style="left:810px;top:611px;width:8px;height:1px;background:#4a5aa0"></div>
<div class="a " style="left:823px;top:604px;width:12px;height:12px;background:radial-gradient(circle at 40% 35%,#7a86e0,#2030a8 75%);border-radius:6px;border:1px solid #c8d0ff"></div>
<div class="t vu" style="left:826px;top:605px;font-size:9px;font-weight:bold;color:#fff">?</div>
<div class="t vu" style="left:838px;top:603px;font-size:5px;font-weight:bold;color:#d8d8d8">CAPS</div>
<div class="t vu" style="left:838px;top:611px;font-size:5px;font-weight:bold;color:#d8d8d8">KANA</div>
<svg style="left:852px;top:613px" width="4" height="3" viewBox="0 0 4 3"><path d="M0 0h4L2 3z" fill="#ccc"/></svg>
<div class="t vu" style="left:851px;top:602px;font-size:6px;color:#ccc">∂</div>
<div class="a " style="left:868px;top:603px;width:36px;height:16px;border:1px solid #9aa6ae;border-radius:5px 2px 2px 5px;background:#141a1e"></div>
<div class="a " style="left:873px;top:613px;width:4px;height:3px;background:#2e9a4a"></div>
<div class="a " style="left:878px;top:611px;width:4px;height:5px;background:#2e9a4a"></div>
<div class="a " style="left:883px;top:609px;width:4px;height:7px;background:#2e9a4a"></div>
<div class="a " style="left:888px;top:607px;width:4px;height:9px;background:#2e9a4a"></div>
<div class="a " style="left:893px;top:605px;width:4px;height:11px;background:#2e9a4a"></div>
<div class="a " style="left:898px;top:603px;width:4px;height:13px;background:#2e9a4a"></div>
<svg style="left:910px;top:604px" width="12" height="13" viewBox="0 0 12 13"><path d="M6 4v9" stroke="#eee" stroke-width="1.600"/><path d="M3.500 2c-1 1.500-1 3.500 0 5M8.500 2c1 1.500 1 3.500 0 5M1.500 .8c-1.500 2.200-1.500 5.200 0 7.400M10.500 .8c1.500 2.200 1.500 5.200 0 7.400" fill="none" stroke="#ddd" stroke-width="1"/></svg>
<div class="a " style="left:934px;top:602px;width:51px;height:17px;border-left:1px solid #5a646c;border-radius:6px 0 0 6px;background:#0c1014"></div>
<div class="a " style="left:943px;top:604px;width:38px;height:13px;background:linear-gradient(#3aa860,#1f8444);border:1px solid #e8f4ea;border-radius:2px"></div>
<div class="a " style="left:981px;top:608px;width:2px;height:5px;background:#e8f4ea"></div>
<div class="t vu" style="left:950px;top:605px;font-size:9.500px;color:#f4fff4;letter-spacing:-0.200px">100%</div>
<div class="a " style="left:988px;top:606px;width:12px;height:9px;border:1px solid #c8c8c8;border-radius:3px"></div>
<div class="a " style="left:996px;top:609px;width:4px;height:3px;background:#c8c8c8"></div>
<svg style="left:1006px;top:609px" width="6" height="4" viewBox="0 0 6 4"><path d="M0 4h6L3 0z" fill="#e8e8e8"/></svg>
<div class="a " style="left:1022px;top:604px;width:12px;height:8px;background:#c8d4e4;border:1px solid #8a9ab0"></div>
<div class="a " style="left:1023px;top:612px;width:2px;height:4px;background:#c8d4e4"></div>
<div class="a " style="left:1040px;top:605px;width:8px;height:6px;background:#d8e0ec;border-radius:2px"></div>
<div class="a " style="left:1045px;top:609px;width:8px;height:6px;background:#a8c0e8;border-radius:2px"></div>
<div class="t " style="left:1057px;top:603px;font-size:12px;color:#e8eef4">❖</div>
<div class="t vu" style="left:1079px;top:605px;font-size:9.800px;color:#e8ecf0">21:46</div>
<div class="a " style="left:1110px;top:601px;width:11px;height:19px;background:linear-gradient(90deg,#4a5a56,#1c2826);border-left:1px solid #6a7a76"></div>
</div></div>
<div class="t vu" style="left:12.3px;top:6.7px;font-size:12.500px;font-weight:bold;color:#f6f6f6;transform:scaleX(1.100);transform-origin:0 0;text-shadow:-1px 0 0 #000,1px 0 0 #000,0 -1px 0 #000,0 1px 0 #000,-1px -1px 0 #000,1px 1px 0 #000,1px -1px 0 #000,-1px 1px 0 #000">G</div>
<div class="a " style="left:24.5px;top:5.5px;width:13px;height:12.5px;border-radius:7px;background:#1a0a00"></div>
<div class="a " style="left:25px;top:6px;width:12px;height:11.5px;border-radius:6px;background:radial-gradient(circle at 42% 38%,#fffbe0 0,#ffe070 22%,#f8a820 50%,#e47808 78%,#b85400 100%)"></div>
<div class="a " style="left:25.8px;top:6.8px;width:1.6px;height:1.6px;border-radius:1px;background:#f8c040"></div>
<div class="a " style="left:28px;top:5.4px;width:1.6px;height:1.6px;border-radius:1px;background:#f8c040"></div>
<div class="a " style="left:30.5px;top:5px;width:1.6px;height:1.6px;border-radius:1px;background:#f8c040"></div>
<div class="t vu" style="left:27.5px;top:8px;font-size:8px;font-weight:bold;color:rgba(255,220,120,.250)">O</div>
<div class="t vu" style="left:39.5px;top:2.6px;font-size:17.300px;font-weight:bold;color:#f6f6f6;transform:scaleX(.860);transform-origin:0 0;text-shadow:-1px 0 0 #000,1px 0 0 #000,0 -1px 0 #000,0 1px 0 #000,-1px -1px 0 #000,1px 1px 0 #000,1px -1px 0 #000,-1px 1px 0 #000">m</div>
<div class="t vu" style="left:511px;top:7px;font-size:9.600px;color:#f0f0f0;letter-spacing:-0.100px">m023.mp4&nbsp; [23/24]</div>
<div class="a " style="left:1049px;top:4.5px;width:14px;height:13px;background:linear-gradient(#707070 0,#4a4a4a 30%,#0a0a0a 42%,#030303 100%);border-radius:3px;box-shadow:0 0 0 1px #1a1a1a,0 0 0 2px #4c4c4c"></div>
<div class="a " style="left:1053px;top:8.0px;width:2.2px;height:2.2px;background:#e4c428"></div>
<div class="a " style="left:1058px;top:8.0px;width:2.2px;height:2.2px;background:#e4c428"></div>
<div class="a " style="left:1053px;top:13.5px;width:2.2px;height:2.2px;background:#e4c428"></div>
<div class="a " style="left:1058px;top:13.5px;width:2.2px;height:2.2px;background:#e4c428"></div>
<div class="a " style="left:1067px;top:4px;width:1.5px;height:15px;background:#111"></div>
<div class="a " style="left:1072px;top:4.5px;width:14px;height:13px;background:linear-gradient(#707070 0,#4a4a4a 30%,#0a0a0a 42%,#030303 100%);border-radius:3px;box-shadow:0 0 0 1px #1a1a1a,0 0 0 2px #4c4c4c"></div>
<div class="a " style="left:1074.5px;top:13px;width:8.5px;height:2px;background:#e8cc78"></div>
<div class="a " style="left:1089px;top:4.5px;width:14px;height:13px;background:linear-gradient(#707070 0,#4a4a4a 30%,#0a0a0a 42%,#030303 100%);border-radius:3px;box-shadow:0 0 0 1px #1a1a1a,0 0 0 2px #4c4c4c"></div>
<div class="a " style="left:1092px;top:8px;width:8.5px;height:7.5px;border:1px solid #e4c428;border-top-width:2px"></div>
<div class="a " style="left:1106px;top:4.5px;width:14px;height:13px;background:linear-gradient(#707070 0,#4a4a4a 30%,#0a0a0a 42%,#030303 100%);border-radius:3px;box-shadow:0 0 0 1px #1a1a1a,0 0 0 2px #4c4c4c"></div>
<svg style="left:1108.500px;top:7px" width="9" height="9" viewBox="0 0 9 9"><path d="M.8 .8l7.400 7.400M8.200 .8L.8 8.200" stroke="#e4c428" stroke-width="1.300"/></svg>
<div class="a " style="left:5px;top:620px;width:1121px;height:17px;background:linear-gradient(#2e2e2e,#3e3e3e 35%,#3a3a3a 80%,#303030);border-radius:0 0 7px 7px"></div>
<div class="t " style="left:12px;top:623px;font-family:'Liberation Mono',monospace;font-size:8.350px;font-weight:bold;color:#eca41c;transform:scaleY(1.250);transform-origin:0 0;text-shadow:0 0 1px #7a4a00">00:01:44/00:02:31</div>
<div class="a " style="left:104px;top:627px;width:945px;height:3px;background:linear-gradient(#7a5208,#f0a820 35%,#e89c18 65%,#5a3c04);border-radius:2px"></div>
<div class="a " style="left:745px;top:626px;width:13px;height:6px;background:linear-gradient(#fff,#f4d8a0);border:1px solid #e09020;border-radius:3px"></div>
<svg style="left:1054px;top:623px" width="13" height="11" viewBox="0 0 13 11"><path d="M1 4h2.500L7 1v9L3.500 7H1z" fill="#eee"/><path d="M8.500 3c1.200 1.300 1.200 3.700 0 5" fill="none" stroke="#ddd" stroke-width="1"/><path d="M10 1.800c2 2 2 5.400 0 7.400" fill="none" stroke="#999" stroke-width="0.800"/></svg>
<div class="a " style="left:1070px;top:627px;width:49px;height:3px;background:linear-gradient(#7a5208,#f0a820 35%,#e89c18 65%,#5a3c04);border-radius:2px"></div>
<div class="a " style="left:1108px;top:626px;width:12px;height:6px;background:linear-gradient(#fff,#f4d8a0);border:1px solid #e09020;border-radius:3px"></div>
<div class="a " style="left:1px;top:637px;width:1130px;height:42px;background:linear-gradient(#ffffff 0,#fbfbfd 12%,#ececf2 40%,#dedee8 68%,#e8e8f0 85%,#f8f8fa 100%);border-radius:0 0 3px 7px"></div>
<div class="a " style="left:7px;top:638px;width:40px;height:40px;border-radius:20px;background:radial-gradient(circle,#c8c8c8 82%,#e4e4e8 92%,rgba(240,240,244,0) 100%)"></div>
<div class="a " style="left:10px;top:641px;width:34px;height:34px;border-radius:17px;background:conic-gradient(from 0deg,#fafafa,#b8b8b8 12%,#f4f4f4 25%,#c4c4c4 38%,#fcfcfc 50%,#b8b8b8 62%,#f4f4f4 75%,#c4c4c4 88%,#fafafa);border:1.500px solid #333;box-shadow:0 0 0 1.500px #f4f4f4 inset"></div>
<div class="a " style="left:23px;top:653px;width:4px;height:12px;background:#0a0a0a"></div>
<div class="a " style="left:28px;top:653px;width:4px;height:12px;background:#0a0a0a"></div>
<div class="a " style="left:46.5px;top:640.5px;width:22px;height:22px;border-radius:11px;background:radial-gradient(circle,#c4c4c4 70%,#e6e6ea 90%,rgba(240,240,244,0) 100%)"></div>
<div class="a " style="left:48.5px;top:642.5px;width:18px;height:18px;border-radius:9px;background:radial-gradient(circle at 50% 35%,#ffffff 0,#f0f0f0 55%,#d4d4d4 100%);border:1.300px solid #3a3a3a;box-shadow:0 0 0 1px #fff inset"></div>
<div class="a " style="left:55px;top:649px;width:5px;height:5px;background:#111"></div>
<div class="a " style="left:69.5px;top:640.5px;width:22px;height:22px;border-radius:11px;background:radial-gradient(circle,#c4c4c4 70%,#e6e6ea 90%,rgba(240,240,244,0) 100%)"></div>
<div class="a " style="left:71.5px;top:642.5px;width:18px;height:18px;border-radius:9px;background:radial-gradient(circle at 50% 35%,#ffffff 0,#f0f0f0 55%,#d4d4d4 100%);border:1.300px solid #3a3a3a;box-shadow:0 0 0 1px #fff inset"></div>
<svg style="left:77px;top:648px" width="7" height="7" viewBox="0 0 7 7"><path d="M1 0v7" stroke="#111" stroke-width="1.600"/><path d="M6.500 0v7L2 3.500z" fill="#111"/></svg>
<div class="a " style="left:93px;top:640.5px;width:22px;height:22px;border-radius:11px;background:radial-gradient(circle,#c4c4c4 70%,#e6e6ea 90%,rgba(240,240,244,0) 100%)"></div>
<div class="a " style="left:95px;top:642.5px;width:18px;height:18px;border-radius:9px;background:radial-gradient(circle at 50% 35%,#ffffff 0,#f0f0f0 55%,#d4d4d4 100%);border:1.300px solid #3a3a3a;box-shadow:0 0 0 1px #fff inset"></div>
<svg style="left:101px;top:648px" width="7" height="7" viewBox="0 0 7 7"><path d="M6 0v7" stroke="#111" stroke-width="1.600"/><path d="M.5 0v7L5 3.500z" fill="#111"/></svg>
<div class="a " style="left:128px;top:640px;width:876px;height:22px;border-radius:11px;background:linear-gradient(#c8c8c8,#fdfdfd)"></div>
<div class="a " style="left:130px;top:642px;width:872px;height:18px;border-radius:9px;background:#000"></div>
<svg style="left:133px;top:644px" width="7" height="8" viewBox="0 0 7 8"><path d="M0 8V3L4 0h3z" fill="#8a8a8a"/></svg>
<svg style="left:992px;top:644px" width="7" height="8" viewBox="0 0 7 8"><path d="M7 8V3L3 0H0z" fill="#8a8a8a"/></svg>
<div class="a " style="left:549px;top:666px;width:7px;height:7px;border-radius:4px;background:radial-gradient(circle at 50% 30%,#999,#111 70%)"></div>
<div class="t vu" style="left:558px;top:665px;font-size:8.200px;color:#1a1a1a">環境設定</div>
<div class="a " style="left:1016.5px;top:640.5px;width:22px;height:22px;border-radius:11px;background:radial-gradient(circle,#c4c4c4 70%,#e6e6ea 90%,rgba(240,240,244,0) 100%)"></div>
<div class="a " style="left:1018.5px;top:642.5px;width:18px;height:18px;border-radius:9px;background:radial-gradient(circle at 50% 35%,#ffffff 0,#f0f0f0 55%,#d4d4d4 100%);border:1.300px solid #3a3a3a;box-shadow:0 0 0 1px #fff inset"></div>
<svg style="left:1024px;top:648px" width="8" height="8" viewBox="0 0 8 8"><path d="M0 4.500h8L4 0z" fill="#222"/><path d="M0 6.800h8" stroke="#222" stroke-width="1.600"/></svg>
<div class="a " style="left:1040px;top:640.5px;width:22px;height:22px;border-radius:11px;background:radial-gradient(circle,#c4c4c4 70%,#e6e6ea 90%,rgba(240,240,244,0) 100%)"></div>
<div class="a " style="left:1042px;top:642.5px;width:18px;height:18px;border-radius:9px;background:radial-gradient(circle at 50% 35%,#ffffff 0,#f0f0f0 55%,#d4d4d4 100%);border:1.300px solid #3a3a3a;box-shadow:0 0 0 1px #fff inset"></div>
<svg style="left:1047px;top:647px" width="8" height="9" viewBox="0 0 8 9"><path d="M0 0h8v4.500L4 8.500 0 4.500z" fill="#888"/><path d="M4 1v5" stroke="#222" stroke-width="1.400"/></svg>
<div class="a " style="left:1063.5px;top:640.5px;width:22px;height:22px;border-radius:11px;background:radial-gradient(circle,#c4c4c4 70%,#e6e6ea 90%,rgba(240,240,244,0) 100%)"></div>
<div class="a " style="left:1065.5px;top:642.5px;width:18px;height:18px;border-radius:9px;background:radial-gradient(circle at 50% 35%,#ffffff 0,#f0f0f0 55%,#d4d4d4 100%);border:1.300px solid #3a3a3a;box-shadow:0 0 0 1px #fff inset"></div>
<div class="a " style="left:1071px;top:648px;width:7px;height:2px;background:#222"></div>
<div class="a " style="left:1071px;top:651px;width:7px;height:2px;background:#222"></div>
<div class="a " style="left:1071px;top:654px;width:7px;height:2px;background:#222"></div>
<div class="a " style="left:1088px;top:640px;width:37px;height:37px;border-radius:19px;background:radial-gradient(circle,#999 75%,#ddd 92%,#f4f4f4 100%)"></div>
<div class="a " style="left:1090px;top:642px;width:33px;height:33px;border-radius:17px;background:radial-gradient(circle at 50% 18%,#9a9a9a 0,#3a3a3a 28%,#0a0a0a 60%,#1a1a1a 100%);border:1px solid #222"></div>
<div class="t vu" style="left:1094px;top:650px;font-size:10.500px;font-weight:bold;color:#f09a1c;letter-spacing:-0.300px;text-shadow:0 0 1px #7a3a00">GOM</div>
<div class="t vu" style="left:1097px;top:661px;font-size:7px;font-weight:bold;color:#f4f4f4;letter-spacing:-0.300px">サイト</div>
<svg style="left:1119px;top:667px" width="11" height="11" viewBox="0 0 11 11"><path d="M11 0L0 11M11 3L3 11M11 6L6 11M11 9L9 11" stroke="#a8a8a8" stroke-width="1"/></svg>
<div class="a " style="left:1132px;top:0px;width:147px;height:687px;background:#fff"></div>
<div class="a " style="left:1132px;top:0px;width:147px;height:36px;background:#e9ebee"></div>
<div class="a " style="left:1272px;top:0px;width:3px;height:36px;background:#fafafa"></div>
<div class="a " style="left:1132px;top:0px;width:147px;height:1px;background:#c8cace"></div>
<div class="a " style="left:1176px;top:12px;width:10px;height:1px;background:#9a9ca0"></div>
<div class="a " style="left:1213px;top:9px;width:9px;height:9px;border:1px solid #8a8c90"></div>
<svg style="left:1251px;top:8px" width="10" height="10" viewBox="0 0 10 10"><path d="M.5 .5l9 9M9.500 .5l-9 9" stroke="#8a8c90" stroke-width="1"/></svg>
<div class="a " style="left:1132px;top:36px;width:147px;height:1px;background:#f0f1f3"></div>
<div class="a " style="left:1132px;top:36px;width:12px;height:30px;overflow:hidden"><div class="a" style="left:-11px;top:3px;width:20px;height:24px;background:#efefef;border-radius:12px"></div><div class="t" style="left:-3px;top:9px;font-size:11px;color:#555">☆</div></div>
<div class="a " style="left:1158px;top:45px;width:12px;height:12px;border-radius:6px;background:#c6c6c6"></div>
<svg style="left:1160px;top:47px" width="8" height="8" viewBox="0 0 8 8"><path d="M6 1C3 0 1.500 2.500 4 4s1 4-2 3" fill="none" stroke="#fff" stroke-width="1.400"/></svg>
<div class="a " style="left:1185px;top:45px;width:13px;height:10px;border-radius:5px;background:#c4c4c4"></div>
<svg style="left:1186px;top:53px" width="5" height="4" viewBox="0 0 5 4"><path d="M0 4L1.500 0H5z" fill="#c4c4c4"/></svg>
<div class="a " style="left:1189px;top:49px;width:6px;height:2px;background:#e4e4e4"></div>
<div class="a " style="left:1211px;top:44px;width:1px;height:13px;background:#d4d4d4"></div>
<div class="a " style="left:1222px;top:42px;width:17px;height:17px;border-radius:9px;background:#e25a12"></div>
<div class="t vu" style="left:1228px;top:45px;font-size:10px;color:#fff">k</div>
<div class="a " style="left:1256px;top:46px;width:2px;height:2px;background:#444;border-radius:1px"></div>
<div class="a " style="left:1256px;top:50px;width:2px;height:2px;background:#444;border-radius:1px"></div>
<div class="a " style="left:1256px;top:54px;width:2px;height:2px;background:#444;border-radius:1px"></div>
<div class="t vu" style="left:1142px;top:72px;font-size:10px;color:#333;font-weight:bold">»</div>
<div class="a " style="left:1157px;top:71px;width:1px;height:14px;background:#d0d0d0"></div>
<div class="a " style="left:1167px;top:72px;width:11px;height:13px;background:#f0f050;border:1px solid #d8d830;border-radius:1px"></div>
<div class="t vu" style="left:1187px;top:73.5px;font-size:9.200px;color:#333;letter-spacing:-1.650px">その他のブックマーク</div>
<div class="a " style="left:1132px;top:92px;width:147px;height:1px;background:#d8d8d8"></div>
<svg style="left:1137px;top:107px" width="5" height="3" viewBox="0 0 5 3"><path d="M0 0h5L2.500 3z" fill="#888"/></svg>
<svg style="left:1254px;top:104px" width="10" height="6" viewBox="0 0 10 6"><path d="M1 1l4 4 4-4" fill="none" stroke="#333" stroke-width="1.400"/></svg>
<div class="a " style="left:1132px;top:123px;width:147px;height:1px;background:#e4e4e4"></div>
<div class="a " style="left:1132px;top:143px;width:147px;height:2px;background:#c0c0c0"></div>
<div class="a " style="left:1132px;top:145px;width:132px;height:20px;background:#f3f3f3;border-bottom:1px solid #c8c8c8"></div>
<div class="t vu" style="left:1248px;top:150px;font-size:8.500px;color:#333">T</div>
<div class="a " style="left:1265px;top:145px;width:1px;height:517px;background:#e0e0e0"></div>
<div class="a " style="left:1132px;top:186px;width:132px;height:1px;background:#ececec"></div>
<div class="a " style="left:1132px;top:204px;width:132px;height:1px;background:#e4e4e4"></div>
<div class="a " style="left:1132px;top:206px;width:132px;height:16px;overflow:hidden"><div class="t" style="left:0;top:2px;font-size:10.4px;color:#1a1a1a;letter-spacing:-0.150px;font-family:"Liberation Sans","Noto Sans CJK JP",sans-serif;">ージして作業しているか</div></div>
<div class="a " style="left:1132px;top:221px;width:132px;height:1px;background:#222"></div>
<div class="a " style="left:1132px;top:222px;width:132px;height:45px;background:#c6eeb2"></div>
<div class="t vu" style="left:1216px;top:254px;font-size:12px;font-weight:bold;color:#111;width:49px;overflow:hidden;letter-spacing:0">提示する内</div>
<div class="a " style="left:1132px;top:267px;width:132px;height:1px;background:repeating-linear-gradient(90deg,#111 0,#111 2px,transparent 2px,transparent 4px)"></div>
<div class="a " style="left:1132px;top:281px;width:132px;height:16px;overflow:hidden"><div class="t" style="left:0;top:2px;font-size:10.9px;color:#1a1a1a;letter-spacing:-0.150px;font-family:"Liberation Sans","Noto Sans CJK JP",sans-serif;">摘した点を意識しつつ、もう</div></div>
<div class="a " style="left:1132px;top:306px;width:132px;height:16px;overflow:hidden"><div class="t" style="left:0;top:2px;font-size:10.9px;color:#1a1a1a;letter-spacing:-0.150px;font-family:"Liberation Sans","Noto Sans CJK JP",sans-serif;">体像を見据えてイチから書き</div></div>
<div class="a " style="left:1132px;top:332px;width:132px;height:16px;overflow:hidden"><div class="t" style="left:0;top:2px;font-size:10.9px;color:#1a1a1a;letter-spacing:-0.150px;font-family:"Liberation Sans","Noto Sans CJK JP",sans-serif;">璧です！</div></div>
<div class="a " style="left:1132px;top:357px;width:132px;height:16px;overflow:hidden"><div class="t" style="left:0;top:2px;font-size:10.9px;color:#1a1a1a;letter-spacing:-0.150px;font-family:"Liberation Sans","Noto Sans CJK JP",sans-serif;">璧です！</div></div>
<div class="a " style="left:1132px;top:382px;width:132px;height:16px;overflow:hidden"><div class="t" style="left:0;top:2px;font-size:10.9px;color:#1a1a1a;letter-spacing:-0.150px;font-family:"Liberation Sans","Noto Sans CJK JP",sans-serif;">璧です！</div></div>
<div class="a " style="left:1132px;top:406px;width:132px;height:16px;overflow:hidden"><div class="t" style="left:0;top:2px;font-size:10.9px;color:#1a1a1a;letter-spacing:-0.150px;font-family:"Liberation Sans","Noto Sans CJK JP",sans-serif;">璧です！</div></div>
<div class="a " style="left:1132px;top:433px;width:132px;height:16px;overflow:hidden"><div class="t" style="left:0;top:2px;font-size:10.9px;color:#1a1a1a;letter-spacing:-0.150px;font-family:"Liberation Sans","Noto Sans CJK JP",sans-serif;">入編レベルではありませんの</div></div>
<div class="a " style="left:1132px;top:457px;width:132px;height:16px;overflow:hidden"><div class="t" style="left:0;top:2px;font-size:10.9px;color:#1a1a1a;letter-spacing:-0.150px;font-family:"Liberation Sans","Noto Sans CJK JP",sans-serif;">展編１の内容をよく理解し、</div></div>
<div class="a " style="left:1132px;top:297px;width:132px;height:1px;background:repeating-linear-gradient(90deg,#8a8a8a 0,#8a8a8a 2px,transparent 2px,transparent 4px)"></div>
<div class="a " style="left:1132px;top:322px;width:132px;height:1px;background:repeating-linear-gradient(90deg,#222 0,#222 2px,transparent 2px,transparent 4px)"></div>
<div class="a " style="left:1132px;top:347px;width:132px;height:1px;background:repeating-linear-gradient(90deg,#222 0,#222 2px,transparent 2px,transparent 4px)"></div>
<div class="a " style="left:1132px;top:372px;width:132px;height:1px;background:repeating-linear-gradient(90deg,#8a8a8a 0,#8a8a8a 2px,transparent 2px,transparent 4px)"></div>
<div class="a " style="left:1132px;top:397px;width:132px;height:1px;background:repeating-linear-gradient(90deg,#222 0,#222 2px,transparent 2px,transparent 4px)"></div>
<div class="a " style="left:1132px;top:422px;width:132px;height:1px;background:repeating-linear-gradient(90deg,#8a8a8a 0,#8a8a8a 2px,transparent 2px,transparent 4px)"></div>
<div class="a " style="left:1132px;top:448px;width:132px;height:1px;background:repeating-linear-gradient(90deg,#222 0,#222 2px,transparent 2px,transparent 4px)"></div>
<div class="a " style="left:1132px;top:472px;width:132px;height:1px;background:repeating-linear-gradient(90deg,#8a8a8a 0,#8a8a8a 2px,transparent 2px,transparent 4px)"></div>
<div class="a " style="left:1132px;top:499px;width:132px;height:1px;background:repeating-linear-gradient(90deg,#222 0,#222 2px,transparent 2px,transparent 4px)"></div>
<div class="a " style="left:1132px;top:524px;width:132px;height:1px;background:repeating-linear-gradient(90deg,#8a8a8a 0,#8a8a8a 2px,transparent 2px,transparent 4px)"></div>
<div class="a " style="left:1132px;top:550px;width:132px;height:1px;background:repeating-linear-gradient(90deg,#222 0,#222 2px,transparent 2px,transparent 4px)"></div>
<div class="a " style="left:1132px;top:575px;width:132px;height:1px;background:repeating-linear-gradient(90deg,#222 0,#222 2px,transparent 2px,transparent 4px)"></div>
<div class="a " style="left:1132px;top:601px;width:132px;height:1px;background:repeating-linear-gradient(90deg,#8a8a8a 0,#8a8a8a 2px,transparent 2px,transparent 4px)"></div>
<div class="a " style="left:1132px;top:626px;width:132px;height:1px;background:repeating-linear-gradient(90deg,#222 0,#222 2px,transparent 2px,transparent 4px)"></div>
<div class="a " style="left:1132px;top:651px;width:132px;height:1px;background:repeating-linear-gradient(90deg,#222 0,#222 2px,transparent 2px,transparent 4px)"></div>
<div class="a " style="left:1266px;top:145px;width:9px;height:517px;background:#f6f6f6"></div>
<div class="a " style="left:1268px;top:279px;width:7px;height:22px;background:#bdbdbd"></div>
<div class="a " style="left:1266px;top:627px;width:9px;height:13px;background:#fafafa;border:1px solid #e2e2e2"></div>
<div class="a " style="left:1266px;top:640px;width:9px;height:12px;background:#fafafa;border:1px solid #e2e2e2"></div>
<svg style="left:1268px;top:632px" width="6" height="4" viewBox="0 0 6 4"><path d="M0 4h6L3 0z" fill="#a0a0a0"/></svg>
<svg style="left:1268px;top:645px" width="6" height="4" viewBox="0 0 6 4"><path d="M0 0h6L3 4z" fill="#a0a0a0"/></svg>
<div class="a " style="left:1240px;top:652px;width:13px;height:11px;background:#fafafa;border:1px solid #e2e2e2"></div>
<div class="a " style="left:1253px;top:652px;width:13px;height:11px;background:#fafafa;border:1px solid #e2e2e2"></div>
<svg style="left:1244px;top:654px" width="4" height="6" viewBox="0 0 4 6"><path d="M4 0v6L0 3z" fill="#a0a0a0"/></svg>
<svg style="left:1258px;top:654px" width="4" height="6" viewBox="0 0 4 6"><path d="M0 0v6L4 3z" fill="#a0a0a0"/></svg>
<div class="a " style="left:1132px;top:662px;width:147px;height:1px;background:#d0d0d0"></div>
<div class="a " style="left:1132px;top:663px;width:39px;height:24px;background:#f1f1f1;border-right:1px solid #d4d4d4"></div>
<div class="a " style="left:1181px;top:670px;width:16px;height:14px;background:#18a860;border-radius:2px"></div>
<svg style="left:1184px;top:672px" width="10" height="10" viewBox="0 0 10 10"><path d="M5 0l1.300 3.700L10 5 6.300 6.300 5 10 3.700 6.300 0 5l3.700-1.300z" fill="#fff"/></svg>
<svg style="left:1186px;top:683px" width="6" height="3" viewBox="0 0 6 3"><path d="M0 0h6L3 3z" fill="#18a860"/></svg>
<div class="t vu" style="left:1208px;top:674px;font-size:10.400px;color:#22a860;letter-spacing:-0.300px">データ探索</div>
<div class="a " style="left:1275px;top:0px;width:5px;height:687px;background:linear-gradient(90deg,#0a1434,#0c2050 40%,#0c2252)"></div>
<div class="a " style="left:0px;top:687px;width:1280px;height:33px;background:#151515"></div>
<div class="a " style="left:0px;top:687px;width:40px;height:33px;background:#0c0c0c"></div>
<div class="a " style="left:1276px;top:687px;width:1px;height:33px;background:#4a4a4a"></div>
<div class="a " style="left:12px;top:697px;width:7px;height:6.5px;background:#f4f4f4"></div>
<div class="a " style="left:20px;top:697px;width:7px;height:6.5px;background:#f4f4f4"></div>
<div class="a " style="left:12px;top:704.5px;width:7px;height:6.5px;background:#f4f4f4"></div>
<div class="a " style="left:20px;top:704.5px;width:7px;height:6.5px;background:#f4f4f4"></div>
<div class="a " style="left:40px;top:687px;width:287px;height:33px;background:#f2f2f2"></div>
<div class="a " style="left:48px;top:695px;width:17px;height:17px;border:2.200px solid #111;border-radius:9px"></div>
<div class="t vu" style="left:74px;top:697.5px;font-size:12px;font-weight:500;color:#262626;letter-spacing:-2px">ここに入力して検索</div>
<svg style="left:304px;top:695px" width="10" height="17" viewBox="0 0 10 17"><rect x="2.500" y="1" width="5" height="9" rx="2.500" fill="none" stroke="#222" stroke-width="1.300"/><path d="M.8 8c0 5 8.400 5 8.400 0M5 12v3.500M2.500 15.800h5" fill="none" stroke="#222" stroke-width="1.200"/><rect x="3.500" y="5" width="3" height="4" fill="#444"/></svg>
<svg style="left:339px;top:696px" width="15" height="14" viewBox="0 0 15 14"><path d="M.8 3.500h9v7h-9z" fill="none" stroke="#fff" stroke-width="1.300"/><path d="M0 .8h10.500M0 13.200h10.500" stroke="#fff" stroke-width="1.200"/><path d="M13 .5v3M13 5.500v3.500M13 11v2.500" stroke="#fff" stroke-width="1.600"/></svg>
<div class="a " style="left:373px;top:717px;width:32px;height:3px;background:#76b9ed"></div>
<div class="a " style="left:380px;top:697px;width:17px;height:13px;background:#f8d060;border-radius:1px"></div>
<div class="a " style="left:380px;top:695px;width:8px;height:3px;background:#e8b030"></div>
<div class="a " style="left:382px;top:703px;width:13px;height:7px;background:#4aa8e8"></div>
<div class="a " style="left:385px;top:706px;width:7px;height:4px;background:#f8e8a0"></div>
<div class="a " style="left:415px;top:717px;width:32px;height:3px;background:#76b9ed"></div>
<div class="a " style="left:421px;top:694px;width:19px;height:19px;border-radius:10px;background:conic-gradient(from -60deg,#e84234 0 120deg,#f8bc08 120deg 240deg,#34a654 240deg 360deg)"></div>
<div class="a " style="left:426px;top:699px;width:9px;height:9px;border-radius:5px;background:#4a8af4;border:1.500px solid #fff"></div>
<div class="a " style="left:455px;top:687px;width:36px;height:33px;background:#2f7a22"></div>
<div class="a " style="left:455px;top:717px;width:36px;height:3px;background:#7ee05c"></div>
<div class="a " style="left:461px;top:692px;width:23px;height:22px;background:linear-gradient(135deg,#6ac84a,#3a9a2a);border:1px solid #2a6a1a"></div>
<div class="a " style="left:466px;top:696px;width:13px;height:13px;border:2.500px solid #f0fff0;border-right:none;border-radius:2px"></div>
<div class="a " style="left:474px;top:696px;width:5px;height:2.5px;background:#f0fff0"></div>
<div class="a " style="left:474px;top:706.5px;width:5px;height:2.5px;background:#f0fff0"></div>
<div class="a " style="left:493px;top:687px;width:40px;height:33px;background:#3c3c3c"></div>
<div class="a " style="left:493px;top:717px;width:40px;height:3px;background:#8ac0f0"></div>
<div class="a " style="left:503px;top:693px;width:20px;height:20px;border-radius:10px;background:radial-gradient(circle at 40% 35%,#fff8d0 0,#f8b428 35%,#e07808 75%,#a85000 100%)"></div>
<div class="a " style="left:506px;top:692px;width:4px;height:4px;background:#f8a010;border-radius:2px"></div>
<div class="a " style="left:515px;top:692px;width:4px;height:4px;background:#f8a010;border-radius:2px"></div>
<div class="a " style="left:1008px;top:696px;width:40px;height:15px;background:#0a0a0a;border:1.500px solid #f4f4f4"></div>
<div class="a " style="left:1010px;top:698px;width:26px;height:11px;background:#27a844"></div>
<div class="a " style="left:1048px;top:700px;width:2px;height:7px;background:#f4f4f4"></div>
<div class="t vu" style="left:1015px;top:698px;font-size:10.500px;color:#fff;letter-spacing:-0.300px">68%</div>
<svg style="left:1054px;top:696px" width="8" height="15" viewBox="0 0 8 15"><path d="M2 0v4M6 0v4" stroke="#fff" stroke-width="1.400"/><path d="M.5 4h7v4L5 10.500V15H3v-4.500L.5 8z" fill="#fff"/></svg>
<svg style="left:1071px;top:700px" width="11" height="7" viewBox="0 0 11 7"><path d="M1 6l4.500-4.500L10 6" fill="none" stroke="#fff" stroke-width="1.400"/></svg>
<svg style="left:1089px;top:697px" width="14" height="14" viewBox="0 0 14 14"><path d="M13 1C6 1 1 6 1 13" fill="none" stroke="#fff" stroke-width="1.200"/><path d="M13 5C8.500 5 5 8.500 5 13" fill="none" stroke="#ddd" stroke-width="1.200"/><path d="M13 9c-2.200 0-4 1.800-4 4" fill="none" stroke="#ccc" stroke-width="1.200"/><circle cx="12" cy="12.500" r="1.300" fill="#fff"/></svg>
<div class="t " style="left:1108px;top:696px;font-size:14px;color:#f0f0f0">❖</div>
<div class="t " style="left:1133px;top:697px;font-size:13px;font-weight:bold;color:#f4f4f4;font-family:'Liberation Serif',serif">A</div>
<div class="a " style="left:1153px;top:698px;width:14px;height:14px;border-radius:7px;background:radial-gradient(circle at 40% 35%,#5aa0f0,#1a5ac8 75%)"></div>
<div class="a " style="left:1162px;top:707px;width:5px;height:5px;border-radius:3px;background:#e83020"></div>
<div class="t vu" style="left:1193px;top:692px;font-size:10.800px;color:#fff;letter-spacing:-0.200px">13:15</div>
<div class="t vu" style="left:1180px;top:706px;font-size:10.800px;color:#fff;letter-spacing:-0.350px">2018/12/25</div>
<svg style="left:1245px;top:697px" width="16" height="15" viewBox="0 0 16 15"><path d="M1 1h13v9.500H5L1 14z" fill="#fff"/><path d="M3.500 4h8M3.500 6.800h8" stroke="#151515" stroke-width="1"/></svg>
<div class="a " style="left:1253px;top:703px;width:13px;height:13px;border-radius:7px;background:#2a2a2a;border:1px solid #ccc"></div>
<div class="t vu" style="left:1257px;top:705px;font-size:9px;color:#fff">1</div>
</body>
</html>
